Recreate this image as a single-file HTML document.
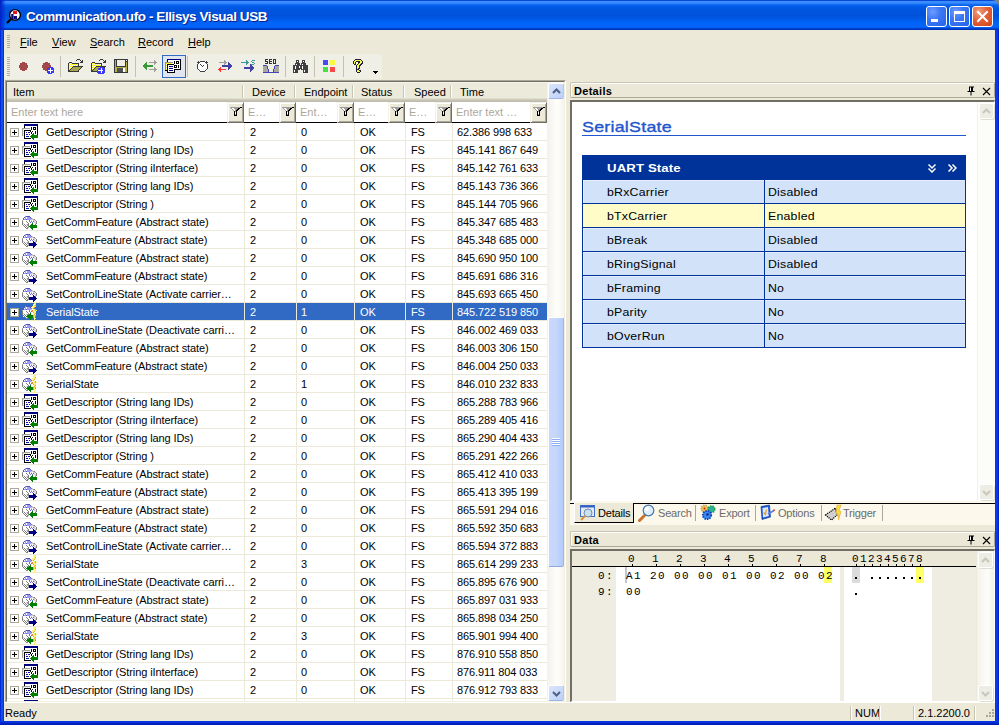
<!DOCTYPE html><html><head><meta charset="utf-8"><style>
*{box-sizing:border-box}
html,body{margin:0;padding:0}
body{width:999px;height:725px;overflow:hidden;position:relative;background:#ece9d8;font-family:"Liberation Sans",sans-serif;font-size:11px;color:#000}
div,span,svg{position:absolute}
#title{left:0;top:0;width:999px;height:30px;border-radius:7px 7px 0 0;background:linear-gradient(to bottom,#0848d8 0px,#0848d8 1px,#3c8eff 1px,#3a8cff 3px,#1a76f6 4px,#0a64ec 5px,#005ae6 7px,#0054de 10px,#0052dc 16px,#0058e6 19px,#0062f6 22px,#0066fc 27px,#0050e0 28px,#0038c0 29px,#0030b0 30px)}
#title .tgl{left:0;top:0;width:6px;height:30px;background:linear-gradient(to right,#0020c8,rgba(0,60,230,0))}
.appico{left:5px;top:7px}
.ttext{left:26px;top:7px;font-weight:bold;font-size:13.5px;color:#fff;white-space:pre;text-shadow:1px 1px 0 #0a1e8c;line-height:20px;letter-spacing:-0.42px}
.cbtn{top:6px;width:21px;height:21px;border:1px solid #fff;border-radius:3px}
.b1{left:926px;background:radial-gradient(circle at 30% 25%,#6f9bff 0,#3c78f5 40%,#2461e8 100%)}
.b2{left:949px;background:radial-gradient(circle at 30% 25%,#6f9bff 0,#3c78f5 40%,#2461e8 100%)}
.b3{left:972px;background:radial-gradient(circle at 30% 25%,#f0a080 0,#e2603a 45%,#d24418 100%)}
.b3 svg{left:-1px;top:-1px}
.minb{left:4px;top:12px;width:7px;height:3px;background:#fff}
.maxb{left:4px;top:4px;width:11px;height:11px;border:1px solid #fff;border-top-width:3px}
#bl{left:0;top:30px;width:4px;height:695px;background:linear-gradient(to right,#0019cf,#0838e6 1px,#166aee 2px,#0831d9 3px,#0831d9 4px)}
#br{left:995px;top:30px;width:4px;height:695px;background:linear-gradient(to right,#0831d9,#0838e6 1px,#0d3ee0 2px,#0019cf 4px)}
#bb{left:0;top:721px;width:999px;height:4px;background:linear-gradient(to bottom,#0831d9,#0838e6 1px,#0027c8 2px,#001ab0 4px)}
.grip{width:3px;background:repeating-linear-gradient(to bottom,#b0aea2 0,#b0aea2 1px,transparent 1px,transparent 2px)}
.menu{top:35px;line-height:14px;white-space:pre}
.menu u{text-decoration:underline}
#tb{left:4px;top:54px;width:378px;height:25px;background:#f0efe5;border-radius:0 3px 3px 0}
.tsep{top:4px;width:1px;height:18px;background:#c5c2b2}
#list{left:5px;top:80px;width:561px;height:623px;border-top:1px solid #aca899;border-left:1px solid #aca899;border-bottom:1px solid #fff;border-right:1px solid #fff;overflow:hidden;background:#fff}
#list:before{content:"";position:absolute;left:0;top:0;right:0;bottom:0;border-top:1px solid #716f64;border-left:1px solid #716f64;border-bottom:1px solid #f1efe2;border-right:1px solid #f1efe2;z-index:5;pointer-events:none}
#lhdr{left:1px;top:1px;width:540px;height:20px;background:linear-gradient(to bottom,#fff 0,#ebeadb 1px,#ebeadb 16px,#d6d2c2 17px,#cbc7b8 18px,#c1bdae 19px)}
.ht{top:2px;line-height:16px;white-space:pre}
.hdiv{top:3px;width:2px;height:13px;border-left:1px solid #c7c5b2;border-right:1px solid #fff}
.ft{top:21px;height:21px;background:#fff;border-bottom:1px solid #000;color:#aca899;overflow:hidden}
.ft span{left:4px;top:3px;line-height:14px;white-space:pre}
.fb{top:21px;width:17px;height:21px;background:#ece9d8;border-top:1px solid #f3f1e6;border-left:1px solid #f3f1e6;border-right:1px solid #716f64;border-bottom:1px solid #716f64;box-shadow:inset 1px 1px 0 #fff,inset -1px -1px 0 #aca899}
.fb svg{left:0px;top:2px;shape-rendering:crispEdges}
.row{left:1px;width:540px;height:18px;border-bottom:1px solid #ece9d8}
.row.sel{background:#316ac5;color:#fff}
.row .c{top:2px;line-height:14px;white-space:pre;letter-spacing:-0.1px}
.exp{left:3px;top:5px;width:9px;height:9px;border:1px solid #aca899;background:#fff}
.exp:before{content:"";position:absolute;left:1px;top:3px;width:5px;height:1px;background:#000}
.exp:after{content:"";position:absolute;left:3px;top:1px;width:1px;height:5px;background:#000}
.ric{left:13px;top:0px;shape-rendering:crispEdges}
.gv{top:42px;width:1px;height:590px;background:#ece9d8}
#vs{left:547px;top:82px;width:17px;height:620px;background:linear-gradient(to right,#f3f1ec,#fefefb 60%,#f6f4ee)}
.sbtn{left:1px;width:16px;height:16px;border:1px solid #fff;border-right-color:#b4c8f0;border-bottom-color:#9fb5e8;border-radius:2px;background:linear-gradient(135deg,#dae6fc,#bcd0f9)}
.sbtn.up{top:1px}
.sbtn.dn{top:603px}
.thumb{left:1px;top:235px;width:16px;height:250px;border:1px solid #fff;border-right:1px solid #a3b6dc;border-bottom:1px solid #8fa8e0;border-radius:2px;background:linear-gradient(to right,#c9d8fc,#c6d6fc 50%,#b4cbfb)}
.tg{left:3px;top:120px;width:8px;height:8px;background:repeating-linear-gradient(to bottom,#fff 0,#fff 1px,#8daef5 1px,#8daef5 2px)}
/* details */
.ptitle{height:16px;border:1px solid #c8c5b5;border-right-color:#aca899;border-bottom-color:#aca899;border-radius:2px;box-shadow:inset 1px 1px 0 #fff;background:#ebe8d8;font-weight:bold}
.ptitle .pt{left:3px;top:1px;line-height:14px;letter-spacing:0.3px}
.pbox{background:#fff;border-top:2px solid #716f64;border-left:2px solid #716f64;border-right:1px solid #fff;border-bottom:1px solid #fff}
#status{left:4px;top:702px;width:991px;height:19px;background:#ece9d8;border-top:1px solid #fff}
#status span{top:3px;line-height:14px;white-space:pre}
.sdiv{top:3px;width:2px;height:14px;border-left:1px solid #c7c5b2;border-right:1px solid #fff}
.ut{background:#d2e3f9;border:1px solid #003399}
.ut span{line-height:14px;white-space:pre;letter-spacing:0.9px}
.uh{left:0;top:0;width:382px;height:24px;background:#003399;color:#fff;font-weight:bold}
.uh span{top:5px;letter-spacing:0.1px;transform:scaleX(1.2);transform-origin:0 0}
.ur{left:0;width:382px;height:24px;border-bottom:1px solid #003399;background:#d2e3f9;box-shadow:inset 1px 1px 0 #e4eefc}
.ur.y{background:#fffcc8;box-shadow:none}
.ur .k{left:24px;top:5px;transform:scaleX(1.12);transform-origin:0 0;letter-spacing:0.2px}
.ur .v{left:185px;top:5px;transform:scaleX(1.12);transform-origin:0 0;letter-spacing:0.2px}
.vd{left:181px;top:0;width:1px;height:23px;background:#003399}
.dsb{background:#fcfcf8;border-left:1px solid #f3f1ea}
.dbtn{left:1px;width:15px;height:16px;border:1px solid #fff;border-radius:2px;background:#eeede5;box-shadow:1px 1px 0 #e0ded2}
.dbtn svg{left:0;top:1px}
#tabs{background:#fcf9ec}
.tab.act{background:#ece9d8;border-right:1px solid #000;border-bottom:1px solid #000;border-left:1px solid #fff}
.tt{top:5px;line-height:14px;color:#6b6b6b;white-space:pre;letter-spacing:-0.2px}
.tsep2{top:4px;width:1px;height:16px;background:#aca899}
.mono{font-family:"Liberation Mono",monospace;font-size:11px;line-height:16px;letter-spacing:1.4px;white-space:pre}

</style></head><body>
<svg width="0" height="0" style="position:absolute"><defs>
<symbol id="funnel" viewBox="0 0 14 12"><rect x="2" y="2" width="10" height="1" fill="#9c9c9c"/><rect x="12" y="2" width="2" height="1" fill="#000000"/><rect x="3" y="3" width="1" height="1" fill="#9c9c9c"/><rect x="4" y="3" width="2" height="1" fill="#ffffff"/><rect x="6" y="3" width="4" height="1" fill="#9c9c9c"/><rect x="10" y="3" width="2" height="1" fill="#000000"/><rect x="4" y="4" width="1" height="1" fill="#9c9c9c"/><rect x="5" y="4" width="2" height="1" fill="#ffffff"/><rect x="7" y="4" width="2" height="1" fill="#9c9c9c"/><rect x="9" y="4" width="2" height="1" fill="#000000"/><rect x="5" y="5" width="1" height="1" fill="#9c9c9c"/><rect x="6" y="5" width="1" height="1" fill="#ffffff"/><rect x="7" y="5" width="1" height="1" fill="#9c9c9c"/><rect x="8" y="5" width="2" height="1" fill="#000000"/><rect x="6" y="6" width="1" height="1" fill="#000000"/><rect x="7" y="6" width="1" height="1" fill="#9c9c9c"/><rect x="8" y="6" width="1" height="1" fill="#000000"/><rect x="6" y="7" width="1" height="1" fill="#000000"/><rect x="7" y="7" width="1" height="1" fill="#ffffff"/><rect x="8" y="7" width="1" height="1" fill="#000000"/><rect x="6" y="8" width="1" height="1" fill="#000000"/><rect x="7" y="8" width="1" height="1" fill="#ffffff"/><rect x="8" y="8" width="1" height="1" fill="#000000"/><rect x="6" y="9" width="1" height="1" fill="#000000"/><rect x="7" y="9" width="1" height="1" fill="#9c9c9c"/><rect x="8" y="9" width="1" height="1" fill="#000000"/><rect x="6" y="10" width="3" height="1" fill="#000000"/></symbol>
<symbol id="ic_d" viewBox="0 0 18 18"><rect x="4" y="1" width="14" height="1" fill="#000080"/><rect x="4" y="2" width="14" height="1" fill="#000080"/><rect x="4" y="3" width="1" height="1" fill="#000000"/><rect x="5" y="3" width="12" height="1" fill="#ffffff"/><rect x="17" y="3" width="1" height="1" fill="#000000"/><rect x="4" y="4" width="1" height="1" fill="#000000"/><rect x="5" y="4" width="6" height="1" fill="#ffffff"/><rect x="11" y="4" width="1" height="1" fill="#000000"/><rect x="12" y="4" width="1" height="1" fill="#ffffff"/><rect x="13" y="4" width="3" height="1" fill="#000000"/><rect x="16" y="4" width="1" height="1" fill="#ffffff"/><rect x="17" y="4" width="1" height="1" fill="#000000"/><rect x="2" y="5" width="8" height="1" fill="#a0a0a0"/><rect x="10" y="5" width="1" height="1" fill="#ffffff"/><rect x="11" y="5" width="1" height="1" fill="#000000"/><rect x="12" y="5" width="1" height="1" fill="#ffffff"/><rect x="13" y="5" width="1" height="1" fill="#000000"/><rect x="14" y="5" width="1" height="1" fill="#ffffff"/><rect x="15" y="5" width="1" height="1" fill="#000000"/><rect x="16" y="5" width="1" height="1" fill="#ffffff"/><rect x="17" y="5" width="1" height="1" fill="#000000"/><rect x="2" y="6" width="1" height="1" fill="#a0a0a0"/><rect x="3" y="6" width="1" height="1" fill="#ffff00"/><rect x="4" y="6" width="1" height="1" fill="#ffffff"/><rect x="5" y="6" width="1" height="1" fill="#ffff00"/><rect x="6" y="6" width="1" height="1" fill="#ffffff"/><rect x="7" y="6" width="1" height="1" fill="#ffff00"/><rect x="8" y="6" width="1" height="1" fill="#ffffff"/><rect x="9" y="6" width="1" height="1" fill="#ffff00"/><rect x="10" y="6" width="1" height="1" fill="#ffffff"/><rect x="11" y="6" width="1" height="1" fill="#000000"/><rect x="12" y="6" width="1" height="1" fill="#ffffff"/><rect x="13" y="6" width="3" height="1" fill="#000000"/><rect x="16" y="6" width="1" height="1" fill="#ffffff"/><rect x="17" y="6" width="1" height="1" fill="#000000"/><rect x="2" y="7" width="1" height="1" fill="#a0a0a0"/><rect x="3" y="7" width="1" height="1" fill="#ffffff"/><rect x="4" y="7" width="7" height="1" fill="#000000"/><rect x="11" y="7" width="6" height="1" fill="#ffffff"/><rect x="17" y="7" width="1" height="1" fill="#000000"/><rect x="2" y="8" width="1" height="1" fill="#a0a0a0"/><rect x="3" y="8" width="1" height="1" fill="#ffff00"/><rect x="4" y="8" width="1" height="1" fill="#000000"/><rect x="5" y="8" width="5" height="1" fill="#ffffff"/><rect x="10" y="8" width="1" height="1" fill="#000000"/><rect x="11" y="8" width="1" height="1" fill="#ffffff"/><rect x="12" y="8" width="1" height="1" fill="#000000"/><rect x="13" y="8" width="2" height="1" fill="#ffffff"/><rect x="15" y="8" width="1" height="1" fill="#000000"/><rect x="16" y="8" width="1" height="1" fill="#ffffff"/><rect x="17" y="8" width="1" height="1" fill="#000000"/><rect x="2" y="9" width="1" height="1" fill="#a0a0a0"/><rect x="3" y="9" width="1" height="1" fill="#ffffff"/><rect x="4" y="9" width="1" height="1" fill="#000000"/><rect x="5" y="9" width="1" height="1" fill="#ffffff"/><rect x="6" y="9" width="1" height="1" fill="#1010b0"/><rect x="7" y="9" width="1" height="1" fill="#ffffff"/><rect x="8" y="9" width="2" height="1" fill="#1010b0"/><rect x="10" y="9" width="1" height="1" fill="#ffffff"/><rect x="11" y="9" width="1" height="1" fill="#000000"/><rect x="12" y="9" width="3" height="1" fill="#ffffff"/><rect x="15" y="9" width="1" height="1" fill="#000000"/><rect x="16" y="9" width="1" height="1" fill="#ffffff"/><rect x="17" y="9" width="1" height="1" fill="#000000"/><rect x="2" y="10" width="1" height="1" fill="#a0a0a0"/><rect x="3" y="10" width="1" height="1" fill="#ffff00"/><rect x="4" y="10" width="1" height="1" fill="#000000"/><rect x="5" y="10" width="6" height="1" fill="#ffffff"/><rect x="11" y="10" width="1" height="1" fill="#000000"/><rect x="12" y="10" width="1" height="1" fill="#ffffff"/><rect x="13" y="10" width="1" height="1" fill="#008000"/><rect x="14" y="10" width="1" height="1" fill="#ffffff"/><rect x="15" y="10" width="1" height="1" fill="#000000"/><rect x="16" y="10" width="1" height="1" fill="#ffffff"/><rect x="17" y="10" width="1" height="1" fill="#000000"/><rect x="2" y="11" width="1" height="1" fill="#a0a0a0"/><rect x="3" y="11" width="1" height="1" fill="#ffffff"/><rect x="4" y="11" width="1" height="1" fill="#000000"/><rect x="5" y="11" width="1" height="1" fill="#ffffff"/><rect x="6" y="11" width="2" height="1" fill="#1010b0"/><rect x="8" y="11" width="1" height="1" fill="#ffffff"/><rect x="9" y="11" width="1" height="1" fill="#1010b0"/><rect x="10" y="11" width="2" height="1" fill="#ffffff"/><rect x="12" y="11" width="2" height="1" fill="#008000"/><rect x="14" y="11" width="3" height="1" fill="#ffffff"/><rect x="17" y="11" width="1" height="1" fill="#000000"/><rect x="2" y="12" width="1" height="1" fill="#a0a0a0"/><rect x="3" y="12" width="1" height="1" fill="#ffff00"/><rect x="4" y="12" width="1" height="1" fill="#000000"/><rect x="5" y="12" width="6" height="1" fill="#ffffff"/><rect x="11" y="12" width="7" height="1" fill="#008000"/><rect x="3" y="13" width="1" height="1" fill="#ffffff"/><rect x="4" y="13" width="1" height="1" fill="#000000"/><rect x="5" y="13" width="1" height="1" fill="#ffffff"/><rect x="6" y="13" width="3" height="1" fill="#1010b0"/><rect x="9" y="13" width="1" height="1" fill="#ffffff"/><rect x="10" y="13" width="8" height="1" fill="#008000"/><rect x="4" y="14" width="1" height="1" fill="#000000"/><rect x="5" y="14" width="6" height="1" fill="#ffffff"/><rect x="11" y="14" width="7" height="1" fill="#008000"/><rect x="4" y="15" width="7" height="1" fill="#000000"/><rect x="11" y="15" width="1" height="1" fill="#ffffff"/><rect x="12" y="15" width="2" height="1" fill="#008000"/><rect x="13" y="16" width="1" height="1" fill="#008000"/></symbol>
<symbol id="ic_g" viewBox="0 0 18 18"><rect x="5" y="3" width="1" height="1" fill="#40c8c0"/><rect x="6" y="3" width="4" height="1" fill="#5454b4"/><rect x="4" y="4" width="1" height="1" fill="#5454b4"/><rect x="5" y="4" width="1" height="1" fill="#9c9cf8"/><rect x="6" y="4" width="1" height="1" fill="#ffffff"/><rect x="7" y="4" width="3" height="1" fill="#9c9cf8"/><rect x="10" y="4" width="1" height="1" fill="#5454b4"/><rect x="3" y="5" width="1" height="1" fill="#5454b4"/><rect x="4" y="5" width="1" height="1" fill="#ffffff"/><rect x="5" y="5" width="1" height="1" fill="#9c9cf8"/><rect x="6" y="5" width="1" height="1" fill="#ffffff"/><rect x="7" y="5" width="4" height="1" fill="#9c9cf8"/><rect x="11" y="5" width="1" height="1" fill="#808080"/><rect x="12" y="5" width="1" height="1" fill="#d4d4d4"/><rect x="3" y="6" width="1" height="1" fill="#5454b4"/><rect x="4" y="6" width="2" height="1" fill="#9c9cf8"/><rect x="6" y="6" width="1" height="1" fill="#5454b4"/><rect x="7" y="6" width="4" height="1" fill="#9c9cf8"/><rect x="11" y="6" width="2" height="1" fill="#d4d4d4"/><rect x="13" y="6" width="1" height="1" fill="#a0a0a0"/><rect x="14" y="6" width="1" height="1" fill="#808080"/><rect x="2" y="7" width="1" height="1" fill="#a0a0a0"/><rect x="3" y="7" width="6" height="1" fill="#ffffff"/><rect x="9" y="7" width="1" height="1" fill="#6a6ae0"/><rect x="10" y="7" width="1" height="1" fill="#ffffff"/><rect x="11" y="7" width="1" height="1" fill="#d4d4d4"/><rect x="12" y="7" width="1" height="1" fill="#ffffff"/><rect x="13" y="7" width="2" height="1" fill="#d4d4d4"/><rect x="15" y="7" width="1" height="1" fill="#a0a0a0"/><rect x="2" y="8" width="1" height="1" fill="#808080"/><rect x="3" y="8" width="3" height="1" fill="#ffffff"/><rect x="6" y="8" width="1" height="1" fill="#808080"/><rect x="7" y="8" width="2" height="1" fill="#ffffff"/><rect x="9" y="8" width="1" height="1" fill="#6a6ae0"/><rect x="10" y="8" width="1" height="1" fill="#ffffff"/><rect x="11" y="8" width="1" height="1" fill="#6a6ae0"/><rect x="12" y="8" width="1" height="1" fill="#ffffff"/><rect x="13" y="8" width="1" height="1" fill="#6a6ae0"/><rect x="14" y="8" width="1" height="1" fill="#d4d4d4"/><rect x="15" y="8" width="1" height="1" fill="#ffffff"/><rect x="16" y="8" width="1" height="1" fill="#808080"/><rect x="2" y="9" width="1" height="1" fill="#808080"/><rect x="3" y="9" width="4" height="1" fill="#ffffff"/><rect x="7" y="9" width="1" height="1" fill="#808080"/><rect x="8" y="9" width="2" height="1" fill="#ffffff"/><rect x="10" y="9" width="1" height="1" fill="#6a6ae0"/><rect x="11" y="9" width="1" height="1" fill="#ffffff"/><rect x="12" y="9" width="1" height="1" fill="#6a6ae0"/><rect x="13" y="9" width="1" height="1" fill="#ffffff"/><rect x="14" y="9" width="2" height="1" fill="#d4d4d4"/><rect x="16" y="9" width="1" height="1" fill="#808080"/><rect x="2" y="10" width="1" height="1" fill="#808080"/><rect x="3" y="10" width="1" height="1" fill="#d4d4d4"/><rect x="4" y="10" width="4" height="1" fill="#ffffff"/><rect x="8" y="10" width="1" height="1" fill="#808080"/><rect x="9" y="10" width="3" height="1" fill="#ffffff"/><rect x="12" y="10" width="1" height="1" fill="#008000"/><rect x="13" y="10" width="2" height="1" fill="#ffffff"/><rect x="15" y="10" width="1" height="1" fill="#d4d4d4"/><rect x="16" y="10" width="1" height="1" fill="#808080"/><rect x="2" y="11" width="1" height="1" fill="#808080"/><rect x="3" y="11" width="1" height="1" fill="#ffffff"/><rect x="4" y="11" width="1" height="1" fill="#808080"/><rect x="5" y="11" width="1" height="1" fill="#ffffff"/><rect x="6" y="11" width="1" height="1" fill="#d4d4d4"/><rect x="7" y="11" width="1" height="1" fill="#a0a0a0"/><rect x="8" y="11" width="1" height="1" fill="#808080"/><rect x="9" y="11" width="2" height="1" fill="#ffffff"/><rect x="11" y="11" width="2" height="1" fill="#008000"/><rect x="13" y="11" width="2" height="1" fill="#ffffff"/><rect x="15" y="11" width="1" height="1" fill="#808080"/><rect x="3" y="12" width="1" height="1" fill="#808080"/><rect x="4" y="12" width="1" height="1" fill="#ffffff"/><rect x="5" y="12" width="1" height="1" fill="#808080"/><rect x="6" y="12" width="1" height="1" fill="#ffffff"/><rect x="7" y="12" width="1" height="1" fill="#a0a0a0"/><rect x="8" y="12" width="1" height="1" fill="#808080"/><rect x="9" y="12" width="1" height="1" fill="#ffffff"/><rect x="10" y="12" width="7" height="1" fill="#008000"/><rect x="3" y="13" width="1" height="1" fill="#ffffff"/><rect x="4" y="13" width="1" height="1" fill="#808080"/><rect x="5" y="13" width="1" height="1" fill="#ffffff"/><rect x="6" y="13" width="1" height="1" fill="#808080"/><rect x="7" y="13" width="1" height="1" fill="#ffffff"/><rect x="8" y="13" width="1" height="1" fill="#a0a0a0"/><rect x="9" y="13" width="8" height="1" fill="#008000"/><rect x="5" y="14" width="1" height="1" fill="#808080"/><rect x="6" y="14" width="1" height="1" fill="#ffffff"/><rect x="7" y="14" width="1" height="1" fill="#808080"/><rect x="8" y="14" width="1" height="1" fill="#a0a0a0"/><rect x="9" y="14" width="1" height="1" fill="#ffffff"/><rect x="10" y="14" width="7" height="1" fill="#008000"/><rect x="6" y="15" width="2" height="1" fill="#808080"/><rect x="11" y="15" width="2" height="1" fill="#008000"/><rect x="12" y="16" width="1" height="1" fill="#008000"/></symbol>
<symbol id="ic_s" viewBox="0 0 18 18"><rect x="5" y="3" width="1" height="1" fill="#40c8c0"/><rect x="6" y="3" width="4" height="1" fill="#5454b4"/><rect x="4" y="4" width="1" height="1" fill="#5454b4"/><rect x="5" y="4" width="1" height="1" fill="#9c9cf8"/><rect x="6" y="4" width="1" height="1" fill="#ffffff"/><rect x="7" y="4" width="3" height="1" fill="#9c9cf8"/><rect x="10" y="4" width="1" height="1" fill="#5454b4"/><rect x="3" y="5" width="1" height="1" fill="#5454b4"/><rect x="4" y="5" width="1" height="1" fill="#ffffff"/><rect x="5" y="5" width="1" height="1" fill="#9c9cf8"/><rect x="6" y="5" width="1" height="1" fill="#ffffff"/><rect x="7" y="5" width="4" height="1" fill="#9c9cf8"/><rect x="11" y="5" width="1" height="1" fill="#808080"/><rect x="12" y="5" width="1" height="1" fill="#d4d4d4"/><rect x="3" y="6" width="1" height="1" fill="#5454b4"/><rect x="4" y="6" width="2" height="1" fill="#9c9cf8"/><rect x="6" y="6" width="1" height="1" fill="#5454b4"/><rect x="7" y="6" width="4" height="1" fill="#9c9cf8"/><rect x="11" y="6" width="2" height="1" fill="#d4d4d4"/><rect x="13" y="6" width="1" height="1" fill="#a0a0a0"/><rect x="14" y="6" width="1" height="1" fill="#808080"/><rect x="2" y="7" width="1" height="1" fill="#a0a0a0"/><rect x="3" y="7" width="6" height="1" fill="#ffffff"/><rect x="9" y="7" width="1" height="1" fill="#6a6ae0"/><rect x="10" y="7" width="1" height="1" fill="#ffffff"/><rect x="11" y="7" width="1" height="1" fill="#d4d4d4"/><rect x="12" y="7" width="1" height="1" fill="#ffffff"/><rect x="13" y="7" width="2" height="1" fill="#d4d4d4"/><rect x="15" y="7" width="1" height="1" fill="#a0a0a0"/><rect x="2" y="8" width="1" height="1" fill="#808080"/><rect x="3" y="8" width="3" height="1" fill="#ffffff"/><rect x="6" y="8" width="1" height="1" fill="#808080"/><rect x="7" y="8" width="2" height="1" fill="#ffffff"/><rect x="9" y="8" width="1" height="1" fill="#6a6ae0"/><rect x="10" y="8" width="1" height="1" fill="#ffffff"/><rect x="11" y="8" width="1" height="1" fill="#6a6ae0"/><rect x="12" y="8" width="1" height="1" fill="#ffffff"/><rect x="13" y="8" width="1" height="1" fill="#6a6ae0"/><rect x="14" y="8" width="1" height="1" fill="#d4d4d4"/><rect x="15" y="8" width="1" height="1" fill="#ffffff"/><rect x="16" y="8" width="1" height="1" fill="#808080"/><rect x="2" y="9" width="1" height="1" fill="#808080"/><rect x="3" y="9" width="4" height="1" fill="#ffffff"/><rect x="7" y="9" width="1" height="1" fill="#808080"/><rect x="8" y="9" width="2" height="1" fill="#ffffff"/><rect x="10" y="9" width="1" height="1" fill="#6a6ae0"/><rect x="11" y="9" width="1" height="1" fill="#ffffff"/><rect x="12" y="9" width="1" height="1" fill="#6a6ae0"/><rect x="13" y="9" width="1" height="1" fill="#ffffff"/><rect x="14" y="9" width="2" height="1" fill="#d4d4d4"/><rect x="16" y="9" width="1" height="1" fill="#808080"/><rect x="2" y="10" width="1" height="1" fill="#808080"/><rect x="3" y="10" width="1" height="1" fill="#d4d4d4"/><rect x="4" y="10" width="4" height="1" fill="#ffffff"/><rect x="8" y="10" width="1" height="1" fill="#808080"/><rect x="9" y="10" width="4" height="1" fill="#ffffff"/><rect x="13" y="10" width="1" height="1" fill="#000080"/><rect x="14" y="10" width="1" height="1" fill="#ffffff"/><rect x="15" y="10" width="1" height="1" fill="#d4d4d4"/><rect x="16" y="10" width="1" height="1" fill="#808080"/><rect x="2" y="11" width="1" height="1" fill="#808080"/><rect x="3" y="11" width="1" height="1" fill="#ffffff"/><rect x="4" y="11" width="1" height="1" fill="#808080"/><rect x="5" y="11" width="1" height="1" fill="#ffffff"/><rect x="6" y="11" width="1" height="1" fill="#d4d4d4"/><rect x="7" y="11" width="1" height="1" fill="#a0a0a0"/><rect x="8" y="11" width="1" height="1" fill="#808080"/><rect x="9" y="11" width="4" height="1" fill="#ffffff"/><rect x="13" y="11" width="2" height="1" fill="#000080"/><rect x="15" y="11" width="1" height="1" fill="#808080"/><rect x="3" y="12" width="1" height="1" fill="#808080"/><rect x="4" y="12" width="1" height="1" fill="#ffffff"/><rect x="5" y="12" width="1" height="1" fill="#808080"/><rect x="6" y="12" width="1" height="1" fill="#ffffff"/><rect x="7" y="12" width="1" height="1" fill="#a0a0a0"/><rect x="8" y="12" width="1" height="1" fill="#808080"/><rect x="9" y="12" width="7" height="1" fill="#000080"/><rect x="3" y="13" width="1" height="1" fill="#ffffff"/><rect x="4" y="13" width="1" height="1" fill="#808080"/><rect x="5" y="13" width="1" height="1" fill="#ffffff"/><rect x="6" y="13" width="1" height="1" fill="#808080"/><rect x="7" y="13" width="1" height="1" fill="#ffffff"/><rect x="8" y="13" width="1" height="1" fill="#a0a0a0"/><rect x="9" y="13" width="8" height="1" fill="#000080"/><rect x="5" y="14" width="1" height="1" fill="#808080"/><rect x="6" y="14" width="1" height="1" fill="#ffffff"/><rect x="7" y="14" width="1" height="1" fill="#808080"/><rect x="8" y="14" width="1" height="1" fill="#a0a0a0"/><rect x="9" y="14" width="7" height="1" fill="#000080"/><rect x="6" y="15" width="2" height="1" fill="#808080"/><rect x="13" y="15" width="2" height="1" fill="#000080"/><rect x="13" y="16" width="1" height="1" fill="#000080"/></symbol>
<symbol id="ic_x" viewBox="0 0 18 18"><rect x="14" y="0" width="2" height="1" fill="#f8f060"/><rect x="13" y="1" width="1" height="1" fill="#f8f060"/><rect x="14" y="1" width="1" height="1" fill="#fcfcb0"/><rect x="15" y="1" width="1" height="1" fill="#f8f060"/><rect x="13" y="2" width="1" height="1" fill="#fcfcb0"/><rect x="14" y="2" width="1" height="1" fill="#f8f060"/><rect x="15" y="2" width="1" height="1" fill="#f0a040"/><rect x="5" y="3" width="1" height="1" fill="#40c8c0"/><rect x="6" y="3" width="4" height="1" fill="#5454b4"/><rect x="12" y="3" width="1" height="1" fill="#f8f060"/><rect x="13" y="3" width="1" height="1" fill="#fcfcb0"/><rect x="14" y="3" width="2" height="1" fill="#f8f060"/><rect x="4" y="4" width="1" height="1" fill="#5454b4"/><rect x="5" y="4" width="1" height="1" fill="#9c9cf8"/><rect x="6" y="4" width="1" height="1" fill="#ffffff"/><rect x="7" y="4" width="3" height="1" fill="#9c9cf8"/><rect x="10" y="4" width="1" height="1" fill="#5454b4"/><rect x="11" y="4" width="1" height="1" fill="#f8f060"/><rect x="12" y="4" width="1" height="1" fill="#fcfcb0"/><rect x="13" y="4" width="1" height="1" fill="#f8f060"/><rect x="14" y="4" width="1" height="1" fill="#f0a040"/><rect x="3" y="5" width="1" height="1" fill="#5454b4"/><rect x="4" y="5" width="1" height="1" fill="#ffffff"/><rect x="5" y="5" width="1" height="1" fill="#9c9cf8"/><rect x="6" y="5" width="1" height="1" fill="#ffffff"/><rect x="7" y="5" width="4" height="1" fill="#9c9cf8"/><rect x="11" y="5" width="1" height="1" fill="#808080"/><rect x="12" y="5" width="1" height="1" fill="#f8f060"/><rect x="13" y="5" width="1" height="1" fill="#f0a040"/><rect x="3" y="6" width="1" height="1" fill="#5454b4"/><rect x="4" y="6" width="2" height="1" fill="#9c9cf8"/><rect x="6" y="6" width="1" height="1" fill="#5454b4"/><rect x="7" y="6" width="4" height="1" fill="#9c9cf8"/><rect x="11" y="6" width="1" height="1" fill="#d4d4d4"/><rect x="12" y="6" width="1" height="1" fill="#ffffff"/><rect x="13" y="6" width="1" height="1" fill="#fcfcb0"/><rect x="14" y="6" width="1" height="1" fill="#f8f060"/><rect x="15" y="6" width="1" height="1" fill="#f0a040"/><rect x="2" y="7" width="1" height="1" fill="#a0a0a0"/><rect x="3" y="7" width="6" height="1" fill="#ffffff"/><rect x="9" y="7" width="1" height="1" fill="#6a6ae0"/><rect x="10" y="7" width="1" height="1" fill="#ffffff"/><rect x="11" y="7" width="1" height="1" fill="#d4d4d4"/><rect x="12" y="7" width="1" height="1" fill="#e07030"/><rect x="13" y="7" width="1" height="1" fill="#fcfcb0"/><rect x="14" y="7" width="1" height="1" fill="#f8f060"/><rect x="15" y="7" width="1" height="1" fill="#f0a040"/><rect x="16" y="7" width="1" height="1" fill="#f8f060"/><rect x="2" y="8" width="1" height="1" fill="#808080"/><rect x="3" y="8" width="3" height="1" fill="#ffffff"/><rect x="6" y="8" width="1" height="1" fill="#808080"/><rect x="7" y="8" width="2" height="1" fill="#ffffff"/><rect x="9" y="8" width="1" height="1" fill="#6a6ae0"/><rect x="10" y="8" width="1" height="1" fill="#ffffff"/><rect x="11" y="8" width="1" height="1" fill="#6a6ae0"/><rect x="12" y="8" width="1" height="1" fill="#f0a040"/><rect x="13" y="8" width="1" height="1" fill="#f8f060"/><rect x="14" y="8" width="1" height="1" fill="#fcfcb0"/><rect x="15" y="8" width="1" height="1" fill="#f8f060"/><rect x="2" y="9" width="1" height="1" fill="#808080"/><rect x="3" y="9" width="4" height="1" fill="#ffffff"/><rect x="7" y="9" width="1" height="1" fill="#808080"/><rect x="8" y="9" width="2" height="1" fill="#ffffff"/><rect x="10" y="9" width="1" height="1" fill="#6a6ae0"/><rect x="11" y="9" width="2" height="1" fill="#ffffff"/><rect x="13" y="9" width="1" height="1" fill="#f0a040"/><rect x="14" y="9" width="2" height="1" fill="#f8f060"/><rect x="2" y="10" width="1" height="1" fill="#808080"/><rect x="3" y="10" width="1" height="1" fill="#d4d4d4"/><rect x="4" y="10" width="4" height="1" fill="#ffffff"/><rect x="8" y="10" width="1" height="1" fill="#808080"/><rect x="9" y="10" width="1" height="1" fill="#ffffff"/><rect x="10" y="10" width="1" height="1" fill="#008000"/><rect x="11" y="10" width="2" height="1" fill="#ffffff"/><rect x="13" y="10" width="1" height="1" fill="#fcfcb0"/><rect x="14" y="10" width="1" height="1" fill="#f8f060"/><rect x="15" y="10" width="1" height="1" fill="#f0a040"/><rect x="2" y="11" width="1" height="1" fill="#808080"/><rect x="3" y="11" width="1" height="1" fill="#ffffff"/><rect x="4" y="11" width="1" height="1" fill="#808080"/><rect x="5" y="11" width="1" height="1" fill="#ffffff"/><rect x="6" y="11" width="1" height="1" fill="#d4d4d4"/><rect x="7" y="11" width="1" height="1" fill="#a0a0a0"/><rect x="8" y="11" width="1" height="1" fill="#808080"/><rect x="9" y="11" width="2" height="1" fill="#008000"/><rect x="11" y="11" width="2" height="1" fill="#ffffff"/><rect x="13" y="11" width="1" height="1" fill="#f8f060"/><rect x="14" y="11" width="1" height="1" fill="#f0a040"/><rect x="15" y="11" width="1" height="1" fill="#f8f060"/><rect x="3" y="12" width="1" height="1" fill="#808080"/><rect x="4" y="12" width="1" height="1" fill="#ffffff"/><rect x="5" y="12" width="1" height="1" fill="#808080"/><rect x="6" y="12" width="1" height="1" fill="#ffffff"/><rect x="7" y="12" width="6" height="1" fill="#008000"/><rect x="13" y="12" width="1" height="1" fill="#f0a040"/><rect x="14" y="12" width="1" height="1" fill="#f8f060"/><rect x="15" y="12" width="1" height="1" fill="#f0a040"/><rect x="3" y="13" width="1" height="1" fill="#ffffff"/><rect x="4" y="13" width="1" height="1" fill="#808080"/><rect x="5" y="13" width="1" height="1" fill="#ffffff"/><rect x="6" y="13" width="7" height="1" fill="#008000"/><rect x="13" y="13" width="1" height="1" fill="#f0a040"/><rect x="14" y="13" width="1" height="1" fill="#f8f060"/><rect x="15" y="13" width="1" height="1" fill="#e07030"/><rect x="5" y="14" width="1" height="1" fill="#808080"/><rect x="6" y="14" width="1" height="1" fill="#ffffff"/><rect x="7" y="14" width="1" height="1" fill="#808080"/><rect x="8" y="14" width="5" height="1" fill="#008000"/><rect x="13" y="14" width="1" height="1" fill="#f0a040"/><rect x="14" y="14" width="1" height="1" fill="#f8f060"/><rect x="6" y="15" width="2" height="1" fill="#808080"/><rect x="9" y="15" width="2" height="1" fill="#008000"/><rect x="14" y="15" width="1" height="1" fill="#fcfcb0"/><rect x="15" y="15" width="1" height="1" fill="#f8f060"/><rect x="10" y="16" width="1" height="1" fill="#008000"/><rect x="14" y="16" width="1" height="1" fill="#f8f060"/><rect x="14" y="17" width="1" height="1" fill="#f8f060"/></symbol>
</defs></svg>
<div style="left:0;top:0;width:10px;height:10px;background:#0a4ee0"></div><div style="left:989px;top:0;width:10px;height:10px;background:#808080"></div>
<div id="title"><div class="tgl"></div>
<svg class="appico" width="18" height="18" viewBox="0 0 18 18"><path d="M5.5 12.5 L2.5 15.5" stroke="#000" stroke-width="2.2" stroke-linecap="round"/><circle cx="10" cy="8" r="5.4" fill="#fff" stroke="#000" stroke-width="1.4"/><rect x="8" y="4" width="4" height="3" fill="#e81818"/><rect x="6.2" y="7" width="2.3" height="5" fill="#0a0a78"/><rect x="8.5" y="9" width="3.5" height="3.5" fill="#0a0a78"/></svg>
<div class="ttext">Communication.ufo - Ellisys Visual USB</div>
<div class="cbtn b1"><div class="minb"></div></div>
<div class="cbtn b2"><div class="maxb"></div></div>
<div class="cbtn b3"><svg width="21" height="21" viewBox="0 0 21 21"><path d="M6 6 L15 15 M15 6 L6 15" stroke="#fff" stroke-width="2" stroke-linecap="square"/></svg></div>
</div>
<div id="bl"></div><div id="br"></div><div id="bb"></div>
<div class="grip" style="left:7px;top:35px;height:14px"></div>
<div class="menu" style="left:20px"><u>F</u>ile</div>
<div class="menu" style="left:52px"><u>V</u>iew</div>
<div class="menu" style="left:90px"><u>S</u>earch</div>
<div class="menu" style="left:138px"><u>R</u>ecord</div>
<div class="menu" style="left:188px"><u>H</u>elp</div>
<div id="tb"></div>
<div class="grip" style="left:7px;top:57px;height:19px"></div>
<div class="tsep" style="left:60px;top:56px;height:21px"></div>
<div class="tsep" style="left:135px;top:56px;height:21px"></div>
<div class="tsep" style="left:187px;top:56px;height:21px"></div>
<div class="tsep" style="left:285px;top:56px;height:21px"></div>
<div class="tsep" style="left:314px;top:56px;height:21px"></div>
<div class="tsep" style="left:343px;top:56px;height:21px"></div>
<div style="left:162px;top:55px;width:24px;height:23px;border:1px solid #316ac5;background:#e1e6ee"></div>
<svg style="left:323px;top:60px" width="13" height="13" viewBox="0 0 13 13"><rect x="0" y="0" width="5" height="5" fill="#4848f8"/><rect x="7" y="0" width="5" height="5" fill="#f8f840"/><rect x="0" y="7" width="5" height="5" fill="#48e048"/><rect x="7" y="7" width="5" height="5" fill="#f84848"/></svg>
<svg style="left:373px;top:71px;shape-rendering:crispEdges" width="5" height="3" viewBox="0 0 5 3"><rect x="0" y="0" width="5" height="1"/><rect x="1" y="1" width="3" height="1"/><rect x="2" y="2" width="1" height="1"/></svg>

23248
<svg style="left:19px;top:62px;shape-rendering:crispEdges" width="9" height="9" viewBox="0 0 9 9"><rect x="3" y="0" width="3" height="1" fill="#a34848"/><rect x="1" y="1" width="7" height="1" fill="#a34848"/><rect x="1" y="2" width="7" height="1" fill="#a34848"/><rect x="0" y="3" width="9" height="1" fill="#a34848"/><rect x="0" y="4" width="9" height="1" fill="#a34848"/><rect x="0" y="5" width="9" height="1" fill="#a34848"/><rect x="1" y="6" width="7" height="1" fill="#a34848"/><rect x="1" y="7" width="7" height="1" fill="#a34848"/><rect x="3" y="8" width="3" height="1" fill="#a34848"/></svg>
<svg style="left:42px;top:62px;shape-rendering:crispEdges" width="14" height="12" viewBox="0 0 14 12"><rect x="3" y="0" width="3" height="1" fill="#a34848"/><rect x="1" y="1" width="7" height="1" fill="#a34848"/><rect x="1" y="2" width="7" height="1" fill="#a34848"/><rect x="0" y="3" width="9" height="1" fill="#a34848"/><rect x="0" y="4" width="9" height="1" fill="#a34848"/><rect x="0" y="5" width="7" height="1" fill="#a34848"/><rect x="7" y="5" width="4" height="1" fill="#3838f8"/><rect x="1" y="6" width="4" height="1" fill="#a34848"/><rect x="5" y="6" width="3" height="1" fill="#3838f8"/><rect x="8" y="6" width="1" height="1" fill="#ffffff"/><rect x="9" y="6" width="3" height="1" fill="#3838f8"/><rect x="1" y="7" width="4" height="1" fill="#a34848"/><rect x="5" y="7" width="3" height="1" fill="#3838f8"/><rect x="8" y="7" width="1" height="1" fill="#ffffff"/><rect x="9" y="7" width="3" height="1" fill="#3838f8"/><rect x="3" y="8" width="2" height="1" fill="#a34848"/><rect x="5" y="8" width="1" height="1" fill="#3838f8"/><rect x="6" y="8" width="5" height="1" fill="#ffffff"/><rect x="11" y="8" width="1" height="1" fill="#3838f8"/><rect x="5" y="9" width="3" height="1" fill="#3838f8"/><rect x="8" y="9" width="1" height="1" fill="#ffffff"/><rect x="9" y="9" width="3" height="1" fill="#3838f8"/><rect x="5" y="10" width="3" height="1" fill="#3838f8"/><rect x="8" y="10" width="1" height="1" fill="#ffffff"/><rect x="9" y="10" width="3" height="1" fill="#3838f8"/><rect x="6" y="11" width="4" height="1" fill="#3838f8"/></svg>
<svg style="left:66px;top:56px;shape-rendering:crispEdges" width="17" height="16" viewBox="0 0 17 16"><rect x="11" y="3" width="3" height="1" fill="#383838"/><rect x="10" y="4" width="1" height="1" fill="#383838"/><rect x="14" y="4" width="1" height="1" fill="#383838"/><rect x="16" y="4" width="1" height="1" fill="#383838"/><rect x="15" y="5" width="2" height="1" fill="#383838"/><rect x="3" y="6" width="3" height="1" fill="#383838"/><rect x="14" y="6" width="3" height="1" fill="#383838"/><rect x="2" y="7" width="1" height="1" fill="#383838"/><rect x="3" y="7" width="1" height="1" fill="#f8f800"/><rect x="4" y="7" width="1" height="1" fill="#fcfcf0"/><rect x="5" y="7" width="1" height="1" fill="#f8f800"/><rect x="6" y="7" width="7" height="1" fill="#383838"/><rect x="2" y="8" width="1" height="1" fill="#383838"/><rect x="3" y="8" width="1" height="1" fill="#fcfcf0"/><rect x="4" y="8" width="1" height="1" fill="#f8f800"/><rect x="5" y="8" width="1" height="1" fill="#fcfcf0"/><rect x="6" y="8" width="1" height="1" fill="#f8f800"/><rect x="7" y="8" width="1" height="1" fill="#fcfcf0"/><rect x="8" y="8" width="1" height="1" fill="#f8f800"/><rect x="9" y="8" width="1" height="1" fill="#fcfcf0"/><rect x="10" y="8" width="1" height="1" fill="#f8f800"/><rect x="11" y="8" width="1" height="1" fill="#fcfcf0"/><rect x="12" y="8" width="1" height="1" fill="#383838"/><rect x="2" y="9" width="1" height="1" fill="#383838"/><rect x="3" y="9" width="1" height="1" fill="#f8f800"/><rect x="4" y="9" width="1" height="1" fill="#fcfcf0"/><rect x="5" y="9" width="1" height="1" fill="#f8f800"/><rect x="6" y="9" width="1" height="1" fill="#fcfcf0"/><rect x="7" y="9" width="1" height="1" fill="#f8f800"/><rect x="8" y="9" width="1" height="1" fill="#fcfcf0"/><rect x="9" y="9" width="1" height="1" fill="#f8f800"/><rect x="10" y="9" width="1" height="1" fill="#fcfcf0"/><rect x="11" y="9" width="1" height="1" fill="#f8f800"/><rect x="12" y="9" width="1" height="1" fill="#383838"/><rect x="2" y="10" width="1" height="1" fill="#383838"/><rect x="3" y="10" width="1" height="1" fill="#fcfcf0"/><rect x="4" y="10" width="1" height="1" fill="#f8f800"/><rect x="5" y="10" width="1" height="1" fill="#fcfcf0"/><rect x="6" y="10" width="1" height="1" fill="#f8f800"/><rect x="7" y="10" width="10" height="1" fill="#383838"/><rect x="2" y="11" width="1" height="1" fill="#383838"/><rect x="3" y="11" width="1" height="1" fill="#f8f800"/><rect x="4" y="11" width="1" height="1" fill="#fcfcf0"/><rect x="5" y="11" width="1" height="1" fill="#f8f800"/><rect x="6" y="11" width="1" height="1" fill="#383838"/><rect x="7" y="11" width="8" height="1" fill="#a8a450"/><rect x="15" y="11" width="1" height="1" fill="#383838"/><rect x="2" y="12" width="1" height="1" fill="#383838"/><rect x="3" y="12" width="1" height="1" fill="#fcfcf0"/><rect x="4" y="12" width="1" height="1" fill="#f8f800"/><rect x="5" y="12" width="1" height="1" fill="#383838"/><rect x="6" y="12" width="8" height="1" fill="#a8a450"/><rect x="14" y="12" width="1" height="1" fill="#383838"/><rect x="2" y="13" width="1" height="1" fill="#383838"/><rect x="3" y="13" width="1" height="1" fill="#f8f800"/><rect x="4" y="13" width="1" height="1" fill="#383838"/><rect x="5" y="13" width="8" height="1" fill="#a8a450"/><rect x="13" y="13" width="1" height="1" fill="#383838"/><rect x="2" y="14" width="2" height="1" fill="#383838"/><rect x="4" y="14" width="8" height="1" fill="#a8a450"/><rect x="12" y="14" width="1" height="1" fill="#383838"/><rect x="2" y="15" width="11" height="1" fill="#383838"/></svg>
<svg style="left:89px;top:56px;shape-rendering:crispEdges" width="18" height="18" viewBox="0 0 18 18"><rect x="11" y="3" width="3" height="1" fill="#383838"/><rect x="10" y="4" width="1" height="1" fill="#383838"/><rect x="14" y="4" width="1" height="1" fill="#383838"/><rect x="16" y="4" width="1" height="1" fill="#383838"/><rect x="15" y="5" width="2" height="1" fill="#383838"/><rect x="3" y="6" width="3" height="1" fill="#383838"/><rect x="14" y="6" width="3" height="1" fill="#383838"/><rect x="2" y="7" width="1" height="1" fill="#383838"/><rect x="3" y="7" width="1" height="1" fill="#f8f800"/><rect x="4" y="7" width="1" height="1" fill="#fcfcf0"/><rect x="5" y="7" width="1" height="1" fill="#f8f800"/><rect x="6" y="7" width="7" height="1" fill="#383838"/><rect x="2" y="8" width="1" height="1" fill="#383838"/><rect x="3" y="8" width="1" height="1" fill="#fcfcf0"/><rect x="4" y="8" width="1" height="1" fill="#f8f800"/><rect x="5" y="8" width="1" height="1" fill="#fcfcf0"/><rect x="6" y="8" width="1" height="1" fill="#f8f800"/><rect x="7" y="8" width="1" height="1" fill="#fcfcf0"/><rect x="8" y="8" width="1" height="1" fill="#f8f800"/><rect x="9" y="8" width="1" height="1" fill="#fcfcf0"/><rect x="10" y="8" width="1" height="1" fill="#f8f800"/><rect x="11" y="8" width="1" height="1" fill="#fcfcf0"/><rect x="12" y="8" width="1" height="1" fill="#383838"/><rect x="2" y="9" width="1" height="1" fill="#383838"/><rect x="3" y="9" width="1" height="1" fill="#f8f800"/><rect x="4" y="9" width="1" height="1" fill="#fcfcf0"/><rect x="5" y="9" width="1" height="1" fill="#f8f800"/><rect x="6" y="9" width="1" height="1" fill="#fcfcf0"/><rect x="7" y="9" width="1" height="1" fill="#f8f800"/><rect x="8" y="9" width="1" height="1" fill="#fcfcf0"/><rect x="9" y="9" width="1" height="1" fill="#f8f800"/><rect x="10" y="9" width="1" height="1" fill="#fcfcf0"/><rect x="11" y="9" width="1" height="1" fill="#f8f800"/><rect x="12" y="9" width="1" height="1" fill="#383838"/><rect x="2" y="10" width="1" height="1" fill="#383838"/><rect x="3" y="10" width="1" height="1" fill="#fcfcf0"/><rect x="4" y="10" width="1" height="1" fill="#f8f800"/><rect x="5" y="10" width="1" height="1" fill="#fcfcf0"/><rect x="6" y="10" width="1" height="1" fill="#f8f800"/><rect x="7" y="10" width="10" height="1" fill="#383838"/><rect x="2" y="11" width="1" height="1" fill="#383838"/><rect x="3" y="11" width="1" height="1" fill="#f8f800"/><rect x="4" y="11" width="1" height="1" fill="#fcfcf0"/><rect x="5" y="11" width="1" height="1" fill="#f8f800"/><rect x="6" y="11" width="1" height="1" fill="#383838"/><rect x="7" y="11" width="4" height="1" fill="#a8a450"/><rect x="11" y="11" width="4" height="1" fill="#3838f8"/><rect x="15" y="11" width="1" height="1" fill="#383838"/><rect x="2" y="12" width="1" height="1" fill="#383838"/><rect x="3" y="12" width="1" height="1" fill="#fcfcf0"/><rect x="4" y="12" width="1" height="1" fill="#f8f800"/><rect x="5" y="12" width="1" height="1" fill="#383838"/><rect x="6" y="12" width="3" height="1" fill="#a8a450"/><rect x="9" y="12" width="3" height="1" fill="#3838f8"/><rect x="12" y="12" width="1" height="1" fill="#ffffff"/><rect x="13" y="12" width="3" height="1" fill="#3838f8"/><rect x="2" y="13" width="1" height="1" fill="#383838"/><rect x="3" y="13" width="1" height="1" fill="#f8f800"/><rect x="4" y="13" width="1" height="1" fill="#383838"/><rect x="5" y="13" width="4" height="1" fill="#a8a450"/><rect x="9" y="13" width="3" height="1" fill="#3838f8"/><rect x="12" y="13" width="1" height="1" fill="#ffffff"/><rect x="13" y="13" width="3" height="1" fill="#3838f8"/><rect x="2" y="14" width="2" height="1" fill="#383838"/><rect x="4" y="14" width="4" height="1" fill="#a8a450"/><rect x="8" y="14" width="1" height="1" fill="#3838f8"/><rect x="9" y="14" width="5" height="1" fill="#ffffff"/><rect x="14" y="14" width="2" height="1" fill="#3838f8"/><rect x="2" y="15" width="6" height="1" fill="#383838"/><rect x="8" y="15" width="4" height="1" fill="#3838f8"/><rect x="12" y="15" width="1" height="1" fill="#ffffff"/><rect x="13" y="15" width="3" height="1" fill="#3838f8"/><rect x="8" y="16" width="4" height="1" fill="#3838f8"/><rect x="12" y="16" width="1" height="1" fill="#ffffff"/><rect x="13" y="16" width="3" height="1" fill="#3838f8"/><rect x="9" y="17" width="6" height="1" fill="#3838f8"/></svg>
<svg style="left:114px;top:59px;shape-rendering:crispEdges" width="14" height="14" viewBox="0 0 14 14"><rect x="0" y="0" width="14" height="1" fill="#383838"/><rect x="0" y="1" width="1" height="1" fill="#383838"/><rect x="1" y="1" width="1" height="1" fill="#b4b048"/><rect x="2" y="1" width="1" height="1" fill="#383838"/><rect x="3" y="1" width="8" height="1" fill="#f0eee4"/><rect x="11" y="1" width="1" height="1" fill="#383838"/><rect x="12" y="1" width="1" height="1" fill="#ffffff"/><rect x="13" y="1" width="1" height="1" fill="#383838"/><rect x="0" y="2" width="1" height="1" fill="#383838"/><rect x="1" y="2" width="1" height="1" fill="#b4b048"/><rect x="2" y="2" width="1" height="1" fill="#383838"/><rect x="3" y="2" width="8" height="1" fill="#f0eee4"/><rect x="11" y="2" width="3" height="1" fill="#383838"/><rect x="0" y="3" width="1" height="1" fill="#383838"/><rect x="1" y="3" width="1" height="1" fill="#b4b048"/><rect x="2" y="3" width="1" height="1" fill="#383838"/><rect x="3" y="3" width="8" height="1" fill="#f0eee4"/><rect x="11" y="3" width="1" height="1" fill="#383838"/><rect x="12" y="3" width="1" height="1" fill="#b4b048"/><rect x="13" y="3" width="1" height="1" fill="#383838"/><rect x="0" y="4" width="1" height="1" fill="#383838"/><rect x="1" y="4" width="1" height="1" fill="#b4b048"/><rect x="2" y="4" width="1" height="1" fill="#383838"/><rect x="3" y="4" width="8" height="1" fill="#f0eee4"/><rect x="11" y="4" width="1" height="1" fill="#383838"/><rect x="12" y="4" width="1" height="1" fill="#b4b048"/><rect x="13" y="4" width="1" height="1" fill="#383838"/><rect x="0" y="5" width="1" height="1" fill="#383838"/><rect x="1" y="5" width="1" height="1" fill="#b4b048"/><rect x="2" y="5" width="1" height="1" fill="#383838"/><rect x="3" y="5" width="8" height="1" fill="#f0eee4"/><rect x="11" y="5" width="1" height="1" fill="#383838"/><rect x="12" y="5" width="1" height="1" fill="#b4b048"/><rect x="13" y="5" width="1" height="1" fill="#383838"/><rect x="0" y="6" width="1" height="1" fill="#383838"/><rect x="1" y="6" width="1" height="1" fill="#b4b048"/><rect x="2" y="6" width="1" height="1" fill="#383838"/><rect x="3" y="6" width="8" height="1" fill="#f0eee4"/><rect x="11" y="6" width="1" height="1" fill="#383838"/><rect x="12" y="6" width="1" height="1" fill="#b4b048"/><rect x="13" y="6" width="1" height="1" fill="#383838"/><rect x="0" y="7" width="1" height="1" fill="#383838"/><rect x="1" y="7" width="1" height="1" fill="#b4b048"/><rect x="2" y="7" width="10" height="1" fill="#383838"/><rect x="12" y="7" width="1" height="1" fill="#b4b048"/><rect x="13" y="7" width="1" height="1" fill="#383838"/><rect x="0" y="8" width="1" height="1" fill="#383838"/><rect x="1" y="8" width="12" height="1" fill="#b4b048"/><rect x="13" y="8" width="1" height="1" fill="#383838"/><rect x="0" y="9" width="1" height="1" fill="#383838"/><rect x="1" y="9" width="2" height="1" fill="#b4b048"/><rect x="3" y="9" width="6" height="1" fill="#505050"/><rect x="9" y="9" width="2" height="1" fill="#ffffff"/><rect x="11" y="9" width="2" height="1" fill="#b4b048"/><rect x="13" y="9" width="1" height="1" fill="#383838"/><rect x="0" y="10" width="1" height="1" fill="#383838"/><rect x="1" y="10" width="2" height="1" fill="#b4b048"/><rect x="3" y="10" width="6" height="1" fill="#505050"/><rect x="9" y="10" width="2" height="1" fill="#ffffff"/><rect x="11" y="10" width="2" height="1" fill="#b4b048"/><rect x="13" y="10" width="1" height="1" fill="#383838"/><rect x="0" y="11" width="1" height="1" fill="#383838"/><rect x="1" y="11" width="2" height="1" fill="#b4b048"/><rect x="3" y="11" width="6" height="1" fill="#505050"/><rect x="9" y="11" width="2" height="1" fill="#ffffff"/><rect x="11" y="11" width="2" height="1" fill="#b4b048"/><rect x="13" y="11" width="1" height="1" fill="#383838"/><rect x="0" y="12" width="1" height="1" fill="#383838"/><rect x="1" y="12" width="2" height="1" fill="#b4b048"/><rect x="3" y="12" width="6" height="1" fill="#505050"/><rect x="9" y="12" width="2" height="1" fill="#ffffff"/><rect x="11" y="12" width="2" height="1" fill="#b4b048"/><rect x="13" y="12" width="1" height="1" fill="#383838"/><rect x="0" y="13" width="14" height="1" fill="#383838"/></svg>

23248
<svg style="left:140px;top:57px;shape-rendering:crispEdges" width="18" height="16" viewBox="0 0 18 16"><rect x="14" y="3" width="1" height="1" fill="#a0a0a0"/><rect x="14" y="4" width="2" height="1" fill="#a0a0a0"/><rect x="6" y="5" width="1" height="1" fill="#3a9a3a"/><rect x="9" y="5" width="8" height="1" fill="#a0a0a0"/><rect x="5" y="6" width="2" height="1" fill="#3a9a3a"/><rect x="14" y="6" width="2" height="1" fill="#a0a0a0"/><rect x="4" y="7" width="3" height="1" fill="#3a9a3a"/><rect x="14" y="7" width="1" height="1" fill="#a0a0a0"/><rect x="3" y="8" width="10" height="1" fill="#3a9a3a"/><rect x="3" y="9" width="10" height="1" fill="#3a9a3a"/><rect x="4" y="10" width="3" height="1" fill="#3a9a3a"/><rect x="14" y="10" width="1" height="1" fill="#a0a0a0"/><rect x="5" y="11" width="2" height="1" fill="#3a9a3a"/><rect x="14" y="11" width="2" height="1" fill="#a0a0a0"/><rect x="6" y="12" width="1" height="1" fill="#3a9a3a"/><rect x="9" y="12" width="8" height="1" fill="#a0a0a0"/><rect x="14" y="13" width="2" height="1" fill="#a0a0a0"/><rect x="14" y="14" width="1" height="1" fill="#a0a0a0"/></svg>
<svg style="left:163px;top:57px;shape-rendering:crispEdges" width="18" height="17" viewBox="0 0 18 17"><rect x="4" y="2" width="14" height="1" fill="#000080"/><rect x="4" y="3" width="1" height="1" fill="#000000"/><rect x="5" y="3" width="12" height="1" fill="#ffffff"/><rect x="17" y="3" width="1" height="1" fill="#000000"/><rect x="4" y="4" width="1" height="1" fill="#000000"/><rect x="5" y="4" width="6" height="1" fill="#ffffff"/><rect x="11" y="4" width="1" height="1" fill="#000000"/><rect x="12" y="4" width="1" height="1" fill="#ffffff"/><rect x="13" y="4" width="3" height="1" fill="#000000"/><rect x="16" y="4" width="1" height="1" fill="#ffffff"/><rect x="17" y="4" width="1" height="1" fill="#000000"/><rect x="2" y="5" width="8" height="1" fill="#8c8c8c"/><rect x="10" y="5" width="1" height="1" fill="#ffffff"/><rect x="11" y="5" width="1" height="1" fill="#000000"/><rect x="12" y="5" width="1" height="1" fill="#ffffff"/><rect x="13" y="5" width="1" height="1" fill="#000000"/><rect x="14" y="5" width="1" height="1" fill="#ffffff"/><rect x="15" y="5" width="1" height="1" fill="#000000"/><rect x="16" y="5" width="1" height="1" fill="#ffffff"/><rect x="17" y="5" width="1" height="1" fill="#000000"/><rect x="2" y="6" width="1" height="1" fill="#8c8c8c"/><rect x="3" y="6" width="1" height="1" fill="#f8f000"/><rect x="4" y="6" width="1" height="1" fill="#ffffff"/><rect x="5" y="6" width="1" height="1" fill="#f8f000"/><rect x="6" y="6" width="1" height="1" fill="#ffffff"/><rect x="7" y="6" width="1" height="1" fill="#f8f000"/><rect x="8" y="6" width="3" height="1" fill="#ffffff"/><rect x="11" y="6" width="1" height="1" fill="#000000"/><rect x="12" y="6" width="1" height="1" fill="#ffffff"/><rect x="13" y="6" width="3" height="1" fill="#000000"/><rect x="16" y="6" width="1" height="1" fill="#ffffff"/><rect x="17" y="6" width="1" height="1" fill="#000000"/><rect x="2" y="7" width="1" height="1" fill="#8c8c8c"/><rect x="3" y="7" width="1" height="1" fill="#ffffff"/><rect x="4" y="7" width="7" height="1" fill="#000000"/><rect x="11" y="7" width="6" height="1" fill="#ffffff"/><rect x="17" y="7" width="1" height="1" fill="#000000"/><rect x="2" y="8" width="1" height="1" fill="#8c8c8c"/><rect x="3" y="8" width="1" height="1" fill="#f8f000"/><rect x="4" y="8" width="1" height="1" fill="#000000"/><rect x="5" y="8" width="6" height="1" fill="#ffffff"/><rect x="11" y="8" width="3" height="1" fill="#000000"/><rect x="14" y="8" width="1" height="1" fill="#ffffff"/><rect x="15" y="8" width="1" height="1" fill="#000000"/><rect x="16" y="8" width="1" height="1" fill="#ffffff"/><rect x="17" y="8" width="1" height="1" fill="#000000"/><rect x="2" y="9" width="1" height="1" fill="#8c8c8c"/><rect x="3" y="9" width="1" height="1" fill="#ffffff"/><rect x="4" y="9" width="1" height="1" fill="#000000"/><rect x="5" y="9" width="1" height="1" fill="#ffffff"/><rect x="6" y="9" width="4" height="1" fill="#000080"/><rect x="10" y="9" width="1" height="1" fill="#ffffff"/><rect x="11" y="9" width="1" height="1" fill="#000000"/><rect x="12" y="9" width="1" height="1" fill="#ffffff"/><rect x="13" y="9" width="1" height="1" fill="#000000"/><rect x="14" y="9" width="1" height="1" fill="#ffffff"/><rect x="15" y="9" width="1" height="1" fill="#000000"/><rect x="16" y="9" width="1" height="1" fill="#ffffff"/><rect x="17" y="9" width="1" height="1" fill="#000000"/><rect x="2" y="10" width="1" height="1" fill="#8c8c8c"/><rect x="3" y="10" width="1" height="1" fill="#f8f000"/><rect x="4" y="10" width="1" height="1" fill="#000000"/><rect x="5" y="10" width="6" height="1" fill="#ffffff"/><rect x="11" y="10" width="3" height="1" fill="#000000"/><rect x="14" y="10" width="1" height="1" fill="#ffffff"/><rect x="15" y="10" width="1" height="1" fill="#000000"/><rect x="16" y="10" width="1" height="1" fill="#ffffff"/><rect x="17" y="10" width="1" height="1" fill="#000000"/><rect x="2" y="11" width="1" height="1" fill="#8c8c8c"/><rect x="3" y="11" width="1" height="1" fill="#ffffff"/><rect x="4" y="11" width="1" height="1" fill="#000000"/><rect x="5" y="11" width="1" height="1" fill="#ffffff"/><rect x="6" y="11" width="4" height="1" fill="#000080"/><rect x="10" y="11" width="7" height="1" fill="#ffffff"/><rect x="17" y="11" width="1" height="1" fill="#000000"/><rect x="2" y="12" width="1" height="1" fill="#8c8c8c"/><rect x="3" y="12" width="1" height="1" fill="#f8f000"/><rect x="4" y="12" width="1" height="1" fill="#000000"/><rect x="5" y="12" width="6" height="1" fill="#ffffff"/><rect x="11" y="12" width="7" height="1" fill="#000000"/><rect x="2" y="13" width="3" height="1" fill="#000000"/><rect x="5" y="13" width="1" height="1" fill="#ffffff"/><rect x="6" y="13" width="4" height="1" fill="#000080"/><rect x="10" y="13" width="1" height="1" fill="#ffffff"/><rect x="11" y="13" width="1" height="1" fill="#000000"/><rect x="4" y="14" width="1" height="1" fill="#000000"/><rect x="5" y="14" width="6" height="1" fill="#ffffff"/><rect x="11" y="14" width="1" height="1" fill="#000000"/><rect x="4" y="15" width="8" height="1" fill="#000000"/></svg>
<svg style="left:194px;top:57px;shape-rendering:crispEdges" width="17" height="16" viewBox="0 0 17 16"><rect x="4" y="4" width="1" height="1" fill="#404040"/><rect x="6" y="4" width="5" height="1" fill="#404040"/><rect x="12" y="4" width="1" height="1" fill="#404040"/><rect x="3" y="5" width="3" height="1" fill="#404040"/><rect x="6" y="5" width="5" height="1" fill="#ffffff"/><rect x="11" y="5" width="3" height="1" fill="#404040"/><rect x="4" y="6" width="1" height="1" fill="#404040"/><rect x="5" y="6" width="7" height="1" fill="#ffffff"/><rect x="12" y="6" width="1" height="1" fill="#404040"/><rect x="3" y="7" width="1" height="1" fill="#404040"/><rect x="4" y="7" width="2" height="1" fill="#ffffff"/><rect x="6" y="7" width="1" height="1" fill="#404040"/><rect x="7" y="7" width="6" height="1" fill="#ffffff"/><rect x="13" y="7" width="1" height="1" fill="#404040"/><rect x="3" y="8" width="1" height="1" fill="#404040"/><rect x="4" y="8" width="3" height="1" fill="#ffffff"/><rect x="7" y="8" width="1" height="1" fill="#404040"/><rect x="8" y="8" width="1" height="1" fill="#ffffff"/><rect x="9" y="8" width="1" height="1" fill="#404040"/><rect x="10" y="8" width="3" height="1" fill="#ffffff"/><rect x="13" y="8" width="1" height="1" fill="#404040"/><rect x="3" y="9" width="1" height="1" fill="#404040"/><rect x="4" y="9" width="4" height="1" fill="#ffffff"/><rect x="8" y="9" width="1" height="1" fill="#404040"/><rect x="9" y="9" width="4" height="1" fill="#ffffff"/><rect x="13" y="9" width="1" height="1" fill="#404040"/><rect x="3" y="10" width="1" height="1" fill="#404040"/><rect x="4" y="10" width="9" height="1" fill="#ffffff"/><rect x="13" y="10" width="1" height="1" fill="#404040"/><rect x="3" y="11" width="1" height="1" fill="#404040"/><rect x="4" y="11" width="9" height="1" fill="#ffffff"/><rect x="13" y="11" width="1" height="1" fill="#404040"/><rect x="4" y="12" width="1" height="1" fill="#404040"/><rect x="5" y="12" width="7" height="1" fill="#ffffff"/><rect x="12" y="12" width="1" height="1" fill="#404040"/><rect x="4" y="13" width="1" height="1" fill="#ffffff"/><rect x="5" y="13" width="1" height="1" fill="#404040"/><rect x="6" y="13" width="5" height="1" fill="#ffffff"/><rect x="11" y="13" width="1" height="1" fill="#404040"/><rect x="12" y="13" width="1" height="1" fill="#ffffff"/><rect x="6" y="14" width="5" height="1" fill="#404040"/></svg>
<svg style="left:216px;top:57px;shape-rendering:crispEdges" width="17" height="16" viewBox="0 0 17 16"><rect x="8" y="3" width="1" height="1" fill="#a0a0a0"/><rect x="8" y="4" width="2" height="1" fill="#a0a0a0"/><rect x="3" y="5" width="8" height="1" fill="#a0a0a0"/><rect x="12" y="5" width="1" height="1" fill="#4242a4"/><rect x="8" y="6" width="2" height="1" fill="#a0a0a0"/><rect x="12" y="6" width="2" height="1" fill="#4242a4"/><rect x="8" y="7" width="1" height="1" fill="#a0a0a0"/><rect x="12" y="7" width="3" height="1" fill="#4242a4"/><rect x="6" y="8" width="10" height="1" fill="#4242a4"/><rect x="6" y="9" width="10" height="1" fill="#4242a4"/><rect x="4" y="10" width="1" height="1" fill="#ff3434"/><rect x="12" y="10" width="3" height="1" fill="#4242a4"/><rect x="3" y="11" width="2" height="1" fill="#ff3434"/><rect x="12" y="11" width="2" height="1" fill="#4242a4"/><rect x="2" y="12" width="8" height="1" fill="#ff3434"/><rect x="12" y="12" width="1" height="1" fill="#4242a4"/><rect x="3" y="13" width="2" height="1" fill="#ff3434"/><rect x="4" y="14" width="1" height="1" fill="#ff3434"/></svg>
<svg style="left:239px;top:57px;shape-rendering:crispEdges" width="17" height="16" viewBox="0 0 17 16"><rect x="7" y="3" width="1" height="1" fill="#3a9ca0"/><rect x="13" y="3" width="3" height="1" fill="#3a9ca0"/><rect x="7" y="4" width="2" height="1" fill="#3a9ca0"/><rect x="12" y="4" width="1" height="1" fill="#3a9ca0"/><rect x="2" y="5" width="8" height="1" fill="#3a9ca0"/><rect x="13" y="5" width="2" height="1" fill="#3a9ca0"/><rect x="7" y="6" width="2" height="1" fill="#3a9ca0"/><rect x="15" y="6" width="1" height="1" fill="#3a9ca0"/><rect x="7" y="7" width="1" height="1" fill="#3a9ca0"/><rect x="11" y="7" width="1" height="1" fill="#4242a4"/><rect x="12" y="7" width="3" height="1" fill="#3a9ca0"/><rect x="11" y="8" width="2" height="1" fill="#4242a4"/><rect x="11" y="9" width="3" height="1" fill="#4242a4"/><rect x="5" y="10" width="10" height="1" fill="#4242a4"/><rect x="5" y="11" width="10" height="1" fill="#4242a4"/><rect x="11" y="12" width="3" height="1" fill="#4242a4"/><rect x="11" y="13" width="2" height="1" fill="#4242a4"/><rect x="11" y="14" width="1" height="1" fill="#4242a4"/></svg>
<svg style="left:261px;top:57px;shape-rendering:crispEdges" width="19" height="17" viewBox="0 0 19 17"><rect x="4" y="2" width="3" height="1" fill="#303030"/><rect x="8" y="2" width="3" height="1" fill="#303030"/><rect x="12" y="2" width="3" height="1" fill="#303030"/><rect x="4" y="3" width="1" height="1" fill="#303030"/><rect x="8" y="3" width="1" height="1" fill="#303030"/><rect x="12" y="3" width="1" height="1" fill="#303030"/><rect x="14" y="3" width="1" height="1" fill="#303030"/><rect x="4" y="4" width="3" height="1" fill="#303030"/><rect x="8" y="4" width="3" height="1" fill="#303030"/><rect x="12" y="4" width="1" height="1" fill="#303030"/><rect x="14" y="4" width="1" height="1" fill="#303030"/><rect x="6" y="5" width="1" height="1" fill="#303030"/><rect x="8" y="5" width="1" height="1" fill="#303030"/><rect x="12" y="5" width="1" height="1" fill="#303030"/><rect x="14" y="5" width="1" height="1" fill="#303030"/><rect x="4" y="6" width="3" height="1" fill="#303030"/><rect x="8" y="6" width="3" height="1" fill="#303030"/><rect x="12" y="6" width="3" height="1" fill="#303030"/><rect x="2" y="8" width="4" height="1" fill="#4444b4"/><rect x="14" y="8" width="4" height="1" fill="#4444b4"/><rect x="2" y="9" width="4" height="1" fill="#a8a8a0"/><rect x="6" y="9" width="1" height="1" fill="#4444b4"/><rect x="13" y="9" width="1" height="1" fill="#4444b4"/><rect x="14" y="9" width="4" height="1" fill="#a8a8a0"/><rect x="2" y="10" width="4" height="1" fill="#a8a8a0"/><rect x="6" y="10" width="1" height="1" fill="#4444b4"/><rect x="13" y="10" width="1" height="1" fill="#4444b4"/><rect x="14" y="10" width="4" height="1" fill="#a8a8a0"/><rect x="2" y="11" width="4" height="1" fill="#a8a8a0"/><rect x="6" y="11" width="1" height="1" fill="#4444b4"/><rect x="13" y="11" width="1" height="1" fill="#4444b4"/><rect x="14" y="11" width="4" height="1" fill="#a8a8a0"/><rect x="2" y="12" width="5" height="1" fill="#a8a8a0"/><rect x="7" y="12" width="1" height="1" fill="#4444b4"/><rect x="12" y="12" width="1" height="1" fill="#4444b4"/><rect x="13" y="12" width="5" height="1" fill="#a8a8a0"/><rect x="2" y="13" width="5" height="1" fill="#a8a8a0"/><rect x="7" y="13" width="1" height="1" fill="#4444b4"/><rect x="12" y="13" width="1" height="1" fill="#4444b4"/><rect x="13" y="13" width="5" height="1" fill="#a8a8a0"/><rect x="2" y="14" width="5" height="1" fill="#a8a8a0"/><rect x="7" y="14" width="1" height="1" fill="#4444b4"/><rect x="12" y="14" width="1" height="1" fill="#4444b4"/><rect x="13" y="14" width="5" height="1" fill="#a8a8a0"/><rect x="2" y="15" width="16" height="1" fill="#4444b4"/></svg>
<svg style="left:290px;top:57px;shape-rendering:crispEdges" width="19" height="17" viewBox="0 0 19 17"><rect x="6" y="3" width="3" height="1" fill="#404040"/><rect x="12" y="3" width="3" height="1" fill="#404040"/><rect x="6" y="4" width="1" height="1" fill="#404040"/><rect x="7" y="4" width="1" height="1" fill="#ffffff"/><rect x="8" y="4" width="1" height="1" fill="#404040"/><rect x="12" y="4" width="1" height="1" fill="#404040"/><rect x="13" y="4" width="1" height="1" fill="#ffffff"/><rect x="14" y="4" width="1" height="1" fill="#404040"/><rect x="6" y="5" width="3" height="1" fill="#404040"/><rect x="12" y="5" width="3" height="1" fill="#404040"/><rect x="5" y="6" width="5" height="1" fill="#404040"/><rect x="11" y="6" width="5" height="1" fill="#404040"/><rect x="5" y="7" width="1" height="1" fill="#404040"/><rect x="6" y="7" width="1" height="1" fill="#ffffff"/><rect x="7" y="7" width="3" height="1" fill="#404040"/><rect x="11" y="7" width="1" height="1" fill="#404040"/><rect x="12" y="7" width="1" height="1" fill="#ffffff"/><rect x="13" y="7" width="3" height="1" fill="#404040"/><rect x="3" y="8" width="15" height="1" fill="#404040"/><rect x="3" y="9" width="2" height="1" fill="#404040"/><rect x="5" y="9" width="1" height="1" fill="#ffffff"/><rect x="6" y="9" width="3" height="1" fill="#404040"/><rect x="9" y="9" width="1" height="1" fill="#ffffff"/><rect x="10" y="9" width="2" height="1" fill="#404040"/><rect x="12" y="9" width="1" height="1" fill="#ffffff"/><rect x="13" y="9" width="5" height="1" fill="#404040"/><rect x="3" y="10" width="2" height="1" fill="#404040"/><rect x="5" y="10" width="1" height="1" fill="#ffffff"/><rect x="6" y="10" width="3" height="1" fill="#404040"/><rect x="9" y="10" width="1" height="1" fill="#ffffff"/><rect x="10" y="10" width="2" height="1" fill="#404040"/><rect x="12" y="10" width="1" height="1" fill="#ffffff"/><rect x="13" y="10" width="5" height="1" fill="#404040"/><rect x="3" y="11" width="2" height="1" fill="#404040"/><rect x="5" y="11" width="1" height="1" fill="#ffffff"/><rect x="6" y="11" width="6" height="1" fill="#404040"/><rect x="12" y="11" width="1" height="1" fill="#ffffff"/><rect x="13" y="11" width="5" height="1" fill="#404040"/><rect x="3" y="12" width="7" height="1" fill="#404040"/><rect x="11" y="12" width="7" height="1" fill="#404040"/><rect x="3" y="13" width="1" height="1" fill="#404040"/><rect x="4" y="13" width="1" height="1" fill="#ffffff"/><rect x="5" y="13" width="3" height="1" fill="#404040"/><rect x="13" y="13" width="1" height="1" fill="#404040"/><rect x="14" y="13" width="1" height="1" fill="#ffffff"/><rect x="15" y="13" width="3" height="1" fill="#404040"/><rect x="3" y="14" width="1" height="1" fill="#404040"/><rect x="4" y="14" width="1" height="1" fill="#ffffff"/><rect x="5" y="14" width="3" height="1" fill="#404040"/><rect x="13" y="14" width="1" height="1" fill="#404040"/><rect x="14" y="14" width="1" height="1" fill="#ffffff"/><rect x="15" y="14" width="3" height="1" fill="#404040"/><rect x="3" y="15" width="5" height="1" fill="#404040"/><rect x="13" y="15" width="5" height="1" fill="#404040"/></svg>
<svg style="left:350px;top:57px;shape-rendering:crispEdges" width="15" height="17" viewBox="0 0 15 17"><rect x="5" y="2" width="6" height="1" fill="#20203c"/><rect x="4" y="3" width="1" height="1" fill="#20203c"/><rect x="5" y="3" width="6" height="1" fill="#f8f840"/><rect x="11" y="3" width="1" height="1" fill="#20203c"/><rect x="3" y="4" width="1" height="1" fill="#20203c"/><rect x="4" y="4" width="2" height="1" fill="#f8f840"/><rect x="6" y="4" width="4" height="1" fill="#20203c"/><rect x="10" y="4" width="2" height="1" fill="#f8f840"/><rect x="12" y="4" width="1" height="1" fill="#20203c"/><rect x="3" y="5" width="1" height="1" fill="#20203c"/><rect x="4" y="5" width="1" height="1" fill="#f8f840"/><rect x="5" y="5" width="1" height="1" fill="#20203c"/><rect x="6" y="5" width="2" height="1" fill="#ffffff"/><rect x="8" y="5" width="2" height="1" fill="#20203c"/><rect x="10" y="5" width="2" height="1" fill="#f8f840"/><rect x="12" y="5" width="1" height="1" fill="#20203c"/><rect x="3" y="6" width="1" height="1" fill="#20203c"/><rect x="4" y="6" width="1" height="1" fill="#f8f840"/><rect x="5" y="6" width="1" height="1" fill="#20203c"/><rect x="7" y="6" width="1" height="1" fill="#ffffff"/><rect x="8" y="6" width="1" height="1" fill="#20203c"/><rect x="9" y="6" width="2" height="1" fill="#f8f840"/><rect x="11" y="6" width="2" height="1" fill="#20203c"/><rect x="4" y="7" width="2" height="1" fill="#20203c"/><rect x="7" y="7" width="1" height="1" fill="#20203c"/><rect x="8" y="7" width="2" height="1" fill="#f8f840"/><rect x="10" y="7" width="2" height="1" fill="#20203c"/><rect x="6" y="8" width="1" height="1" fill="#20203c"/><rect x="7" y="8" width="2" height="1" fill="#f8f840"/><rect x="9" y="8" width="2" height="1" fill="#20203c"/><rect x="6" y="9" width="1" height="1" fill="#20203c"/><rect x="7" y="9" width="2" height="1" fill="#f8f840"/><rect x="9" y="9" width="1" height="1" fill="#20203c"/><rect x="6" y="10" width="1" height="1" fill="#20203c"/><rect x="7" y="10" width="2" height="1" fill="#f8f840"/><rect x="9" y="10" width="1" height="1" fill="#20203c"/><rect x="6" y="11" width="1" height="1" fill="#20203c"/><rect x="7" y="11" width="1" height="1" fill="#f8f840"/><rect x="8" y="11" width="2" height="1" fill="#20203c"/><rect x="6" y="12" width="3" height="1" fill="#20203c"/><rect x="6" y="13" width="1" height="1" fill="#20203c"/><rect x="7" y="13" width="2" height="1" fill="#f8f840"/><rect x="9" y="13" width="2" height="1" fill="#20203c"/><rect x="6" y="14" width="1" height="1" fill="#20203c"/><rect x="7" y="14" width="3" height="1" fill="#f8f840"/><rect x="10" y="14" width="1" height="1" fill="#20203c"/><rect x="7" y="15" width="3" height="1" fill="#20203c"/></svg>

<div id="list">
<div id="lhdr">
<div class="ht" style="left:6px">Item</div>
<div class="ht" style="left:245px">Device</div>
<div class="ht" style="left:297px">Endpoint</div>
<div class="ht" style="left:354px">Status</div>
<div class="ht" style="left:407px">Speed</div>
<div class="ht" style="left:453px">Time</div>
<div class="hdiv" style="left:235px"></div>
<div class="hdiv" style="left:287px"></div>
<div class="hdiv" style="left:345px"></div>
<div class="hdiv" style="left:396px"></div>
<div class="hdiv" style="left:443px"></div>
</div>
<div class="ft" style="left:1px;width:220px"><span>Enter text here</span></div>
<div class="fb" style="left:221px"><svg width="14" height="12" viewBox="0 0 14 12"><use href="#funnel"/></svg></div>
<div class="ft" style="left:238px;width:35px"><span>E…</span></div>
<div class="fb" style="left:273px"><svg width="14" height="12" viewBox="0 0 14 12"><use href="#funnel"/></svg></div>
<div class="ft" style="left:290px;width:41px"><span>Ent…</span></div>
<div class="fb" style="left:331px"><svg width="14" height="12" viewBox="0 0 14 12"><use href="#funnel"/></svg></div>
<div class="ft" style="left:348px;width:34px"><span>E…</span></div>
<div class="fb" style="left:382px"><svg width="14" height="12" viewBox="0 0 14 12"><use href="#funnel"/></svg></div>
<div class="ft" style="left:399px;width:30px"><span>E…</span></div>
<div class="fb" style="left:429px"><svg width="14" height="12" viewBox="0 0 14 12"><use href="#funnel"/></svg></div>
<div class="ft" style="left:446px;width:78px"><span>Enter text …</span></div>
<div class="fb" style="left:524px"><svg width="14" height="12" viewBox="0 0 14 12"><use href="#funnel"/></svg></div>
<div class="row" style="top:42px">
<div class="exp"></div><svg class="ric" width="18" height="18"><use href="#ic_d"/></svg>
<span class="c" style="left:39px">GetDescriptor (String )</span><span class="c" style="left:243px">2</span><span class="c" style="left:294px">0</span><span class="c" style="left:353px">OK</span><span class="c" style="left:404px">FS</span><span class="c" style="left:450px">62.386 998 633</span>
</div>
<div class="row" style="top:60px">
<div class="exp"></div><svg class="ric" width="18" height="18"><use href="#ic_d"/></svg>
<span class="c" style="left:39px">GetDescriptor (String lang IDs)</span><span class="c" style="left:243px">2</span><span class="c" style="left:294px">0</span><span class="c" style="left:353px">OK</span><span class="c" style="left:404px">FS</span><span class="c" style="left:450px">845.141 867 649</span>
</div>
<div class="row" style="top:78px">
<div class="exp"></div><svg class="ric" width="18" height="18"><use href="#ic_d"/></svg>
<span class="c" style="left:39px">GetDescriptor (String iInterface)</span><span class="c" style="left:243px">2</span><span class="c" style="left:294px">0</span><span class="c" style="left:353px">OK</span><span class="c" style="left:404px">FS</span><span class="c" style="left:450px">845.142 761 633</span>
</div>
<div class="row" style="top:96px">
<div class="exp"></div><svg class="ric" width="18" height="18"><use href="#ic_d"/></svg>
<span class="c" style="left:39px">GetDescriptor (String lang IDs)</span><span class="c" style="left:243px">2</span><span class="c" style="left:294px">0</span><span class="c" style="left:353px">OK</span><span class="c" style="left:404px">FS</span><span class="c" style="left:450px">845.143 736 366</span>
</div>
<div class="row" style="top:114px">
<div class="exp"></div><svg class="ric" width="18" height="18"><use href="#ic_d"/></svg>
<span class="c" style="left:39px">GetDescriptor (String )</span><span class="c" style="left:243px">2</span><span class="c" style="left:294px">0</span><span class="c" style="left:353px">OK</span><span class="c" style="left:404px">FS</span><span class="c" style="left:450px">845.144 705 966</span>
</div>
<div class="row" style="top:132px">
<div class="exp"></div><svg class="ric" width="18" height="18"><use href="#ic_g"/></svg>
<span class="c" style="left:39px">GetCommFeature (Abstract state)</span><span class="c" style="left:243px">2</span><span class="c" style="left:294px">0</span><span class="c" style="left:353px">OK</span><span class="c" style="left:404px">FS</span><span class="c" style="left:450px">845.347 685 483</span>
</div>
<div class="row" style="top:150px">
<div class="exp"></div><svg class="ric" width="18" height="18"><use href="#ic_s"/></svg>
<span class="c" style="left:39px">SetCommFeature (Abstract state)</span><span class="c" style="left:243px">2</span><span class="c" style="left:294px">0</span><span class="c" style="left:353px">OK</span><span class="c" style="left:404px">FS</span><span class="c" style="left:450px">845.348 685 000</span>
</div>
<div class="row" style="top:168px">
<div class="exp"></div><svg class="ric" width="18" height="18"><use href="#ic_g"/></svg>
<span class="c" style="left:39px">GetCommFeature (Abstract state)</span><span class="c" style="left:243px">2</span><span class="c" style="left:294px">0</span><span class="c" style="left:353px">OK</span><span class="c" style="left:404px">FS</span><span class="c" style="left:450px">845.690 950 100</span>
</div>
<div class="row" style="top:186px">
<div class="exp"></div><svg class="ric" width="18" height="18"><use href="#ic_s"/></svg>
<span class="c" style="left:39px">SetCommFeature (Abstract state)</span><span class="c" style="left:243px">2</span><span class="c" style="left:294px">0</span><span class="c" style="left:353px">OK</span><span class="c" style="left:404px">FS</span><span class="c" style="left:450px">845.691 686 316</span>
</div>
<div class="row" style="top:204px">
<div class="exp"></div><svg class="ric" width="18" height="18"><use href="#ic_s"/></svg>
<span class="c" style="left:39px">SetControlLineState (Activate carrier…</span><span class="c" style="left:243px">2</span><span class="c" style="left:294px">0</span><span class="c" style="left:353px">OK</span><span class="c" style="left:404px">FS</span><span class="c" style="left:450px">845.693 665 450</span>
</div>
<div class="row sel" style="top:222px">
<div class="exp"></div><svg class="ric" width="18" height="18"><use href="#ic_x"/></svg>
<span class="c" style="left:39px">SerialState</span><span class="c" style="left:243px">2</span><span class="c" style="left:294px">1</span><span class="c" style="left:353px">OK</span><span class="c" style="left:404px">FS</span><span class="c" style="left:450px">845.722 519 850</span>
</div>
<div class="row" style="top:240px">
<div class="exp"></div><svg class="ric" width="18" height="18"><use href="#ic_s"/></svg>
<span class="c" style="left:39px">SetControlLineState (Deactivate carri…</span><span class="c" style="left:243px">2</span><span class="c" style="left:294px">0</span><span class="c" style="left:353px">OK</span><span class="c" style="left:404px">FS</span><span class="c" style="left:450px">846.002 469 033</span>
</div>
<div class="row" style="top:258px">
<div class="exp"></div><svg class="ric" width="18" height="18"><use href="#ic_g"/></svg>
<span class="c" style="left:39px">GetCommFeature (Abstract state)</span><span class="c" style="left:243px">2</span><span class="c" style="left:294px">0</span><span class="c" style="left:353px">OK</span><span class="c" style="left:404px">FS</span><span class="c" style="left:450px">846.003 306 150</span>
</div>
<div class="row" style="top:276px">
<div class="exp"></div><svg class="ric" width="18" height="18"><use href="#ic_s"/></svg>
<span class="c" style="left:39px">SetCommFeature (Abstract state)</span><span class="c" style="left:243px">2</span><span class="c" style="left:294px">0</span><span class="c" style="left:353px">OK</span><span class="c" style="left:404px">FS</span><span class="c" style="left:450px">846.004 250 033</span>
</div>
<div class="row" style="top:294px">
<div class="exp"></div><svg class="ric" width="18" height="18"><use href="#ic_x"/></svg>
<span class="c" style="left:39px">SerialState</span><span class="c" style="left:243px">2</span><span class="c" style="left:294px">1</span><span class="c" style="left:353px">OK</span><span class="c" style="left:404px">FS</span><span class="c" style="left:450px">846.010 232 833</span>
</div>
<div class="row" style="top:312px">
<div class="exp"></div><svg class="ric" width="18" height="18"><use href="#ic_d"/></svg>
<span class="c" style="left:39px">GetDescriptor (String lang IDs)</span><span class="c" style="left:243px">2</span><span class="c" style="left:294px">0</span><span class="c" style="left:353px">OK</span><span class="c" style="left:404px">FS</span><span class="c" style="left:450px">865.288 783 966</span>
</div>
<div class="row" style="top:330px">
<div class="exp"></div><svg class="ric" width="18" height="18"><use href="#ic_d"/></svg>
<span class="c" style="left:39px">GetDescriptor (String iInterface)</span><span class="c" style="left:243px">2</span><span class="c" style="left:294px">0</span><span class="c" style="left:353px">OK</span><span class="c" style="left:404px">FS</span><span class="c" style="left:450px">865.289 405 416</span>
</div>
<div class="row" style="top:348px">
<div class="exp"></div><svg class="ric" width="18" height="18"><use href="#ic_d"/></svg>
<span class="c" style="left:39px">GetDescriptor (String lang IDs)</span><span class="c" style="left:243px">2</span><span class="c" style="left:294px">0</span><span class="c" style="left:353px">OK</span><span class="c" style="left:404px">FS</span><span class="c" style="left:450px">865.290 404 433</span>
</div>
<div class="row" style="top:366px">
<div class="exp"></div><svg class="ric" width="18" height="18"><use href="#ic_d"/></svg>
<span class="c" style="left:39px">GetDescriptor (String )</span><span class="c" style="left:243px">2</span><span class="c" style="left:294px">0</span><span class="c" style="left:353px">OK</span><span class="c" style="left:404px">FS</span><span class="c" style="left:450px">865.291 422 266</span>
</div>
<div class="row" style="top:384px">
<div class="exp"></div><svg class="ric" width="18" height="18"><use href="#ic_g"/></svg>
<span class="c" style="left:39px">GetCommFeature (Abstract state)</span><span class="c" style="left:243px">2</span><span class="c" style="left:294px">0</span><span class="c" style="left:353px">OK</span><span class="c" style="left:404px">FS</span><span class="c" style="left:450px">865.412 410 033</span>
</div>
<div class="row" style="top:402px">
<div class="exp"></div><svg class="ric" width="18" height="18"><use href="#ic_s"/></svg>
<span class="c" style="left:39px">SetCommFeature (Abstract state)</span><span class="c" style="left:243px">2</span><span class="c" style="left:294px">0</span><span class="c" style="left:353px">OK</span><span class="c" style="left:404px">FS</span><span class="c" style="left:450px">865.413 395 199</span>
</div>
<div class="row" style="top:420px">
<div class="exp"></div><svg class="ric" width="18" height="18"><use href="#ic_g"/></svg>
<span class="c" style="left:39px">GetCommFeature (Abstract state)</span><span class="c" style="left:243px">2</span><span class="c" style="left:294px">0</span><span class="c" style="left:353px">OK</span><span class="c" style="left:404px">FS</span><span class="c" style="left:450px">865.591 294 016</span>
</div>
<div class="row" style="top:438px">
<div class="exp"></div><svg class="ric" width="18" height="18"><use href="#ic_s"/></svg>
<span class="c" style="left:39px">SetCommFeature (Abstract state)</span><span class="c" style="left:243px">2</span><span class="c" style="left:294px">0</span><span class="c" style="left:353px">OK</span><span class="c" style="left:404px">FS</span><span class="c" style="left:450px">865.592 350 683</span>
</div>
<div class="row" style="top:456px">
<div class="exp"></div><svg class="ric" width="18" height="18"><use href="#ic_s"/></svg>
<span class="c" style="left:39px">SetControlLineState (Activate carrier…</span><span class="c" style="left:243px">2</span><span class="c" style="left:294px">0</span><span class="c" style="left:353px">OK</span><span class="c" style="left:404px">FS</span><span class="c" style="left:450px">865.594 372 883</span>
</div>
<div class="row" style="top:474px">
<div class="exp"></div><svg class="ric" width="18" height="18"><use href="#ic_x"/></svg>
<span class="c" style="left:39px">SerialState</span><span class="c" style="left:243px">2</span><span class="c" style="left:294px">3</span><span class="c" style="left:353px">OK</span><span class="c" style="left:404px">FS</span><span class="c" style="left:450px">865.614 299 233</span>
</div>
<div class="row" style="top:492px">
<div class="exp"></div><svg class="ric" width="18" height="18"><use href="#ic_s"/></svg>
<span class="c" style="left:39px">SetControlLineState (Deactivate carri…</span><span class="c" style="left:243px">2</span><span class="c" style="left:294px">0</span><span class="c" style="left:353px">OK</span><span class="c" style="left:404px">FS</span><span class="c" style="left:450px">865.895 676 900</span>
</div>
<div class="row" style="top:510px">
<div class="exp"></div><svg class="ric" width="18" height="18"><use href="#ic_g"/></svg>
<span class="c" style="left:39px">GetCommFeature (Abstract state)</span><span class="c" style="left:243px">2</span><span class="c" style="left:294px">0</span><span class="c" style="left:353px">OK</span><span class="c" style="left:404px">FS</span><span class="c" style="left:450px">865.897 031 933</span>
</div>
<div class="row" style="top:528px">
<div class="exp"></div><svg class="ric" width="18" height="18"><use href="#ic_s"/></svg>
<span class="c" style="left:39px">SetCommFeature (Abstract state)</span><span class="c" style="left:243px">2</span><span class="c" style="left:294px">0</span><span class="c" style="left:353px">OK</span><span class="c" style="left:404px">FS</span><span class="c" style="left:450px">865.898 034 250</span>
</div>
<div class="row" style="top:546px">
<div class="exp"></div><svg class="ric" width="18" height="18"><use href="#ic_x"/></svg>
<span class="c" style="left:39px">SerialState</span><span class="c" style="left:243px">2</span><span class="c" style="left:294px">3</span><span class="c" style="left:353px">OK</span><span class="c" style="left:404px">FS</span><span class="c" style="left:450px">865.901 994 400</span>
</div>
<div class="row" style="top:564px">
<div class="exp"></div><svg class="ric" width="18" height="18"><use href="#ic_d"/></svg>
<span class="c" style="left:39px">GetDescriptor (String lang IDs)</span><span class="c" style="left:243px">2</span><span class="c" style="left:294px">0</span><span class="c" style="left:353px">OK</span><span class="c" style="left:404px">FS</span><span class="c" style="left:450px">876.910 558 850</span>
</div>
<div class="row" style="top:582px">
<div class="exp"></div><svg class="ric" width="18" height="18"><use href="#ic_d"/></svg>
<span class="c" style="left:39px">GetDescriptor (String iInterface)</span><span class="c" style="left:243px">2</span><span class="c" style="left:294px">0</span><span class="c" style="left:353px">OK</span><span class="c" style="left:404px">FS</span><span class="c" style="left:450px">876.911 804 033</span>
</div>
<div class="row" style="top:600px">
<div class="exp"></div><svg class="ric" width="18" height="18"><use href="#ic_d"/></svg>
<span class="c" style="left:39px">GetDescriptor (String lang IDs)</span><span class="c" style="left:243px">2</span><span class="c" style="left:294px">0</span><span class="c" style="left:353px">OK</span><span class="c" style="left:404px">FS</span><span class="c" style="left:450px">876.912 793 833</span>
</div>
<div class="row" style="top:618px">
<div class="exp"></div><svg class="ric" width="18" height="18"><use href="#ic_d"/></svg>
<span class="c" style="left:39px">GetDescriptor (String iInterface)</span><span class="c" style="left:243px">2</span><span class="c" style="left:294px">0</span><span class="c" style="left:353px">OK</span><span class="c" style="left:404px">FS</span><span class="c" style="left:450px">876.913 802 100</span>
</div>
<div class="gv" style="left:238px"></div>
<div class="gv" style="left:290px"></div>
<div class="gv" style="left:348px"></div>
<div class="gv" style="left:399px"></div>
<div class="gv" style="left:446px"></div>
</div>
<div id="vs"><div class="sbtn up"><svg width="15" height="15" viewBox="0 0 15 15"><path d="M4 9 L7.5 5.5 L11 9" fill="none" stroke="#4d6185" stroke-width="2"/></svg></div>
<div class="thumb"><div class="tg"></div></div>
<div class="sbtn dn"><svg width="15" height="15" viewBox="0 0 15 15"><path d="M4 6 L7.5 9.5 L11 6" fill="none" stroke="#4d6185" stroke-width="2"/></svg></div></div>
<div class="ptitle" style="left:570px;top:82px;width:425px"><span class="pt">Details</span>
<svg style="left:396px;top:3px" width="9" height="10" viewBox="0 0 9 10"><path d="M2 0.5 H7 V1.5 H6 V5 H7.5 V6 H4.5 V9.5 H3.5 V6 H0.5 V5 H2 V1.5 Z" fill="#000"/><rect x="3" y="1.5" width="1" height="3.5" fill="#fff"/></svg>
<svg style="left:411px;top:4px" width="9" height="9" viewBox="0 0 9 9"><path d="M1 1 L8 8 M8 1 L1 8" stroke="#000" stroke-width="1.1"/></svg></div>
<div class="pbox" style="left:570px;top:100px;width:425px;height:401px">
<div style="left:10px;top:16px;font-size:15px;line-height:18px;color:#2256cf;letter-spacing:0.2px;white-space:pre;transform:scaleX(1.19);transform-origin:0 0;-webkit-text-stroke:0.35px #2256cf">SerialState</div>
<div style="left:10px;top:33px;width:384px;height:1px;background:#2256cf"></div>
<div class="ut" style="left:10px;top:53px;width:384px;height:193px">
<div class="uh"><span style="left:24px">UART State</span>
<svg style="left:345px;top:8px" width="8" height="9" viewBox="0 0 8 9"><path d="M0.5 0.5 L4 4 L7.5 0.5 M0.5 4.5 L4 8 L7.5 4.5" fill="none" stroke="#fff" stroke-width="1.5"/></svg>
<svg style="left:365px;top:8px" width="9" height="8" viewBox="0 0 9 8"><path d="M0.5 0.5 L4 4 L0.5 7.5 M4.5 0.5 L8 4 L4.5 7.5" fill="none" stroke="#fff" stroke-width="1.5"/></svg></div>
<div class="ur" style="top:24px"><span class="k">bRxCarrier</span><div class="vd"></div><span class="v">Disabled</span></div>
<div class="ur y" style="top:48px"><span class="k">bTxCarrier</span><div class="vd"></div><span class="v">Enabled</span></div>
<div class="ur" style="top:72px"><span class="k">bBreak</span><div class="vd"></div><span class="v">Disabled</span></div>
<div class="ur" style="top:96px"><span class="k">bRingSignal</span><div class="vd"></div><span class="v">Disabled</span></div>
<div class="ur" style="top:120px"><span class="k">bFraming</span><div class="vd"></div><span class="v">No</span></div>
<div class="ur" style="top:144px"><span class="k">bParity</span><div class="vd"></div><span class="v">No</span></div>
<div class="ur" style="top:168px"><span class="k">bOverRun</span><div class="vd"></div><span class="v">No</span></div>
</div>
<div class="dsb" style="left:405px;top:0px;width:17px;height:398px">
<div class="dbtn" style="top:1px"><svg width="13" height="13" viewBox="0 0 13 13"><path d="M3 8 L6.5 4.5 L10 8" fill="none" stroke="#c9c7ba" stroke-width="2"/></svg></div>
<div class="dbtn" style="top:382px"><svg width="13" height="13" viewBox="0 0 13 13"><path d="M3 5 L6.5 8.5 L10 5" fill="none" stroke="#c9c7ba" stroke-width="2"/></svg></div>
</div>
</div>
<div id="tabs" style="left:570px;top:501px;width:425px;height:24px">
<div style="left:0;top:2px;width:425px;height:1px;background:#000"></div>
<div class="tab act" style="left:4px;top:2px;width:60px;height:20px"></div>
<svg style="left:10px;top:4px" width="16" height="16" viewBox="0 0 16 16"><rect x="0.5" y="0.5" width="14" height="11" fill="#e8e8f0" stroke="#4070d0"/><rect x="0.5" y="0.5" width="14" height="2" fill="#3060c0"/><circle cx="8" cy="8" r="4" fill="#c8e0f0" stroke="#7090b0"/><path d="M5 11 L1 15" stroke="#e09030" stroke-width="2"/></svg>
<span class="tt" style="left:28px;color:#000">Details</span>
<svg style="left:67px;top:2px" width="20" height="20" viewBox="0 0 20 20"><path d="M7.5 12.5 L2.5 17.5" stroke="#d07028" stroke-width="3" stroke-linecap="round"/><circle cx="11.5" cy="7.5" r="5.3" fill="#dff0fc" stroke="#4a78a8" stroke-width="1.2"/><circle cx="10" cy="6" r="2" fill="#fff"/></svg>
<span class="tt" style="left:88px">Search</span><div class="tsep2" style="left:125px"></div>
<svg style="left:128px;top:2px" width="20" height="20" viewBox="0 0 20 20"><circle cx="6.5" cy="5.5" r="3.3" fill="#f4c050" stroke="#b8a868" stroke-width="1.6" stroke-dasharray="1.3 1"/><circle cx="6.5" cy="5.5" r="0.9" fill="#c02010"/><circle cx="13.5" cy="6.3" r="3.3" fill="#30b0a0" stroke="#10a040" stroke-width="1.6" stroke-dasharray="1.3 1"/><circle cx="9" cy="12" r="4.2" fill="#3a8af0" stroke="#0a40c0" stroke-width="1.8" stroke-dasharray="1.5 1"/><circle cx="9.5" cy="11.5" r="1.2" fill="#102080"/></svg>
<span class="tt" style="left:149px">Export</span><div class="tsep2" style="left:185px"></div>
<svg style="left:188px;top:2px" width="20" height="20" viewBox="0 0 20 20"><path d="M3 3.5 L11.5 2 L12.5 14 L4 16.5 Z" fill="#1a5ad8" stroke="#0a2a80" stroke-width="0.6"/><path d="M4.5 5 L10 4 L10.8 13 L5 14.5 Z" fill="#dfe9ff"/><path d="M5.5 9.5 L7.3 11.5 L8.5 6.5" fill="none" stroke="#e0a020" stroke-width="1.3"/><path d="M10 11 L16 7.5" stroke="#5a80e0" stroke-width="2"/><rect x="15" y="6.5" width="2" height="1.5" fill="#e05030"/></svg>
<span class="tt" style="left:208px">Options</span><div class="tsep2" style="left:251px"></div>
<svg style="left:252px;top:2px" width="20" height="20" viewBox="0 0 20 20"><path d="M3.5 12 L13.5 5 L15 12 L9.5 17 Z" fill="#d0d0d0" stroke="#000" stroke-width="1.2" stroke-dasharray="1.2 0.9"/><path d="M15 2 L19 2 L17 7.5 L19 8.5 L16.5 17 L16 11 L14 10.5 Z" fill="#f4e040" stroke="#e8a030" stroke-width="0.6"/></svg>
<span class="tt" style="left:273px">Trigger</span><div class="tsep2" style="left:312px"></div>
</div>

<div class="ptitle" style="left:570px;top:531px;width:425px"><span class="pt">Data</span>
<svg style="left:396px;top:3px" width="9" height="10" viewBox="0 0 9 10"><path d="M2 0.5 H7 V1.5 H6 V5 H7.5 V6 H4.5 V9.5 H3.5 V6 H0.5 V5 H2 V1.5 Z" fill="#000"/><rect x="3" y="1.5" width="1" height="3.5" fill="#fff"/></svg>
<svg style="left:411px;top:4px" width="9" height="9" viewBox="0 0 9 9"><path d="M1 1 L8 8 M8 1 L1 8" stroke="#000" stroke-width="1.1"/></svg></div>
<div class="pbox" style="left:570px;top:549px;width:425px;height:153px;background:#ece9d8">
 <div style="left:0;top:0;width:404px;height:15px;background:#ebe8d8"></div>
 <div style="left:0;top:15px;width:404px;height:1px;background:#000"></div>
 <div style="left:0;top:16px;width:44px;height:134px;background:#efede2"></div>
 <div style="left:44px;top:16px;width:224px;height:134px;background:#fff"></div>
 <div style="left:268px;top:16px;width:4px;height:134px;background:#efede2"></div>
 <div style="left:272px;top:16px;width:88px;height:134px;background:#fff"></div>
 <div style="left:360px;top:16px;width:44px;height:134px;background:#efede2"></div>
 <div style="left:252px;top:16px;width:8px;height:16px;background:#ffff66"></div>
 <div style="left:280px;top:16px;width:8px;height:16px;background:#dcdcdc"></div>
 <div style="left:344px;top:16px;width:8px;height:16px;background:#ffff66"></div>
 <div style="left:53px;top:16px;width:2px;height:16px;background:#c2c6d0"></div>
 <div class="mono" style="left:56px;top:0px">0  1  2  3  4  5  6  7  8</div>
 <div class="mono" style="left:280px;top:0px">012345678</div>
 <div class="mono" style="left:18px;top:17px"> 0:</div>
 <div class="mono" style="left:18px;top:33px"> 9:</div>
 <div class="mono" style="left:54px;top:17px">A1 20 00 00 01 00 02 00 02</div>
 <div class="mono" style="left:54px;top:33px">00</div>
 <div style="left:283px;top:26px;width:2px;height:2px;background:#000"></div><div style="left:299px;top:26px;width:2px;height:2px;background:#000"></div><div style="left:307px;top:26px;width:2px;height:2px;background:#000"></div><div style="left:315px;top:26px;width:2px;height:2px;background:#000"></div><div style="left:323px;top:26px;width:2px;height:2px;background:#000"></div><div style="left:331px;top:26px;width:2px;height:2px;background:#000"></div><div style="left:339px;top:26px;width:2px;height:2px;background:#000"></div><div style="left:347px;top:26px;width:2px;height:2px;background:#000"></div><div style="left:283px;top:42px;width:2px;height:2px;background:#000"></div>
 <svg style="left:0;top:13px" width="404" height="2"><g fill="#000">
 <rect x="60" y="0" width="1" height="2"/><rect x="84" y="0" width="1" height="2"/><rect x="108" y="0" width="1" height="2"/><rect x="132" y="0" width="1" height="2"/><rect x="156" y="0" width="1" height="2"/><rect x="180" y="0" width="1" height="2"/><rect x="204" y="0" width="1" height="2"/><rect x="228" y="0" width="1" height="2"/><rect x="252" y="0" width="1" height="2"/>
 <rect x="284" y="0" width="1" height="2"/><rect x="292" y="0" width="1" height="2"/><rect x="300" y="0" width="1" height="2"/><rect x="308" y="0" width="1" height="2"/><rect x="316" y="0" width="1" height="2"/><rect x="324" y="0" width="1" height="2"/><rect x="332" y="0" width="1" height="2"/><rect x="340" y="0" width="1" height="2"/><rect x="348" y="0" width="1" height="2"/></g></svg>
 <div class="dsb" style="left:405px;top:0px;width:17px;height:150px;border-left:none;background:linear-gradient(to right,#f3f1ea,#fdfdfa 60%,#f3f1ea)">
 <div class="dbtn" style="top:1px"><svg width="13" height="13" viewBox="0 0 13 13"><path d="M3 8 L6.5 4.5 L10 8" fill="none" stroke="#c9c7ba" stroke-width="2"/></svg></div>
 <div class="dbtn" style="top:134px"><svg width="13" height="13" viewBox="0 0 13 13"><path d="M3 5 L6.5 8.5 L10 5" fill="none" stroke="#c9c7ba" stroke-width="2"/></svg></div>
 </div>
</div>

<div id="status"><span style="left:1px">Ready</span>
<div class="sdiv" style="left:846px"></div><span style="left:851px">NUM</span><div class="sdiv" style="left:875px"></div>
<div class="sdiv" style="left:909px"></div><span style="left:914px">2.1.2200.0</span><div class="sdiv" style="left:970px"></div>
<svg style="position:absolute;left:979px;top:5px" width="12" height="12"><g fill="#aca899"><rect x="9" y="1" width="2" height="2"/><rect x="6" y="4" width="2" height="2"/><rect x="9" y="4" width="2" height="2"/><rect x="3" y="7" width="2" height="2"/><rect x="6" y="7" width="2" height="2"/><rect x="9" y="7" width="2" height="2"/></g></svg></div>
</body></html>
